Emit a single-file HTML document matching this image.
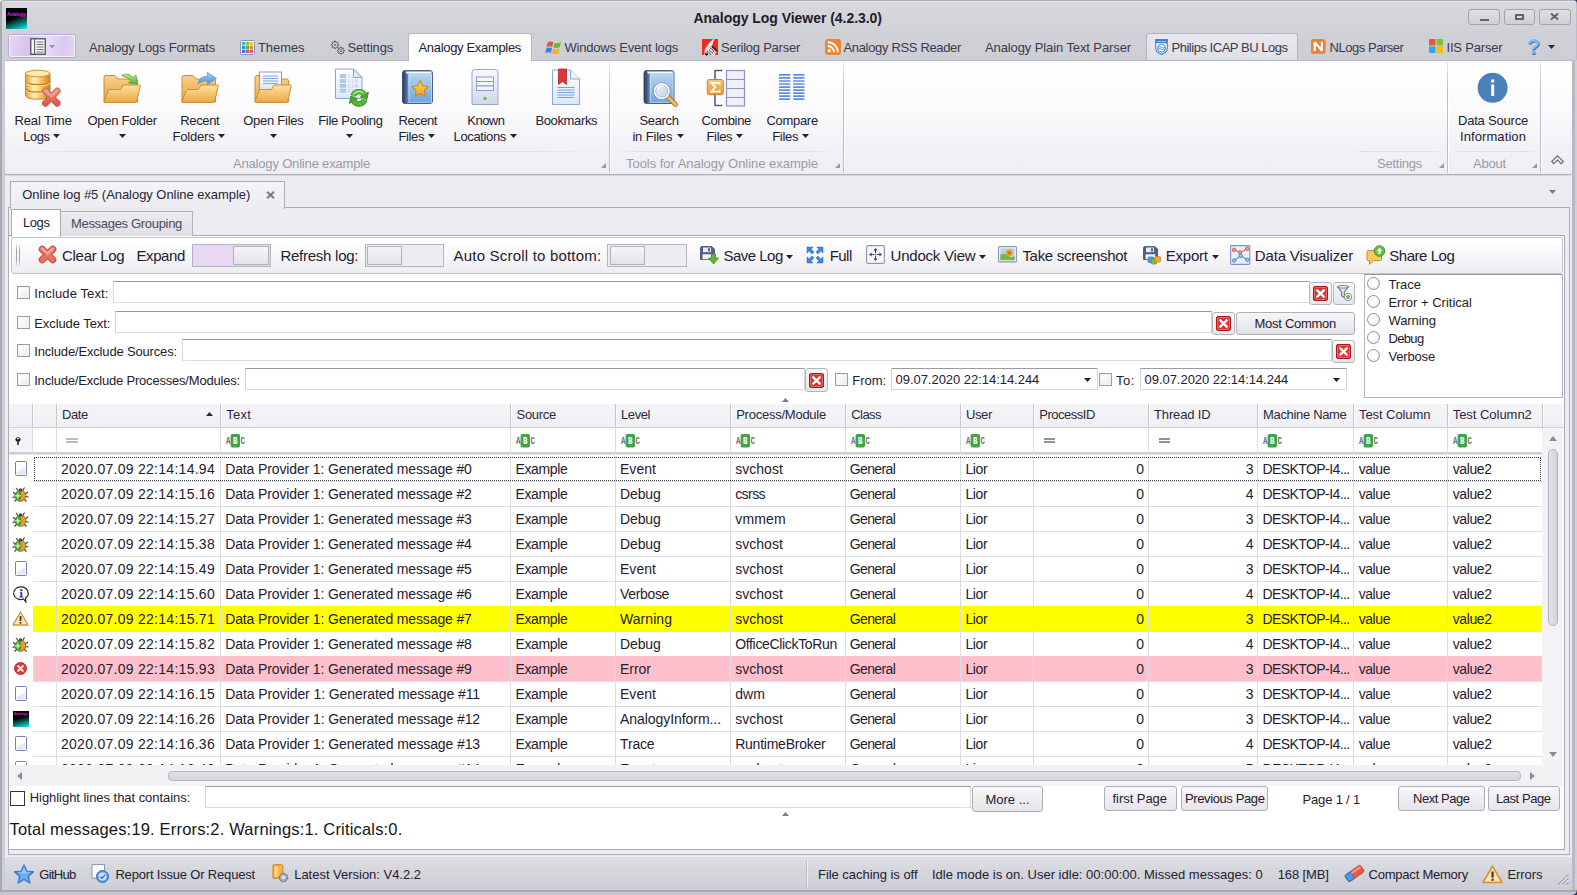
<!DOCTYPE html>
<html lang="en"><head><meta charset="utf-8"><title>Analogy Log Viewer (4.2.3.0)</title>
<style>
html,body{margin:0;padding:0}
body{width:1577px;height:895px;overflow:hidden;position:relative;background:#d2d2d9;font-family:"Liberation Sans",sans-serif;color:#1f2030;font-size:13px}
div,span.t,svg.i{position:absolute;box-sizing:border-box}
span.t{white-space:pre;display:block}
svg.i{overflow:visible}

</style></head>
<body>
<div style="left:0px;top:0px;width:1577px;height:62px;background:linear-gradient(#d8d8de,#d0d0d7 55%,#cdcdd5)"></div>
<div style="left:0px;top:0px;width:1577px;height:1px;background:#aeaeb8"></div>
<div style="left:0px;top:1px;width:1577px;height:1px;background:#e4e4ea"></div>
<div style="left:0px;top:60px;width:1577px;height:835px;background:#e9e9ee"></div>
<div style="left:0px;top:0px;width:1.5px;height:895px;background:#a9a9b3"></div>
<div style="left:1.5px;top:60px;width:3px;height:835px;background:#cdcdd5"></div>
<div style="left:4.5px;top:60px;width:1px;height:835px;background:#b6b6c0"></div>
<div style="left:1572px;top:60px;width:2.5px;height:835px;background:#b9b9c3"></div>
<div style="left:1574.5px;top:60px;width:2.5px;height:835px;background:#cfcfd7"></div>
<div style="left:1575.5px;top:0px;width:1.5px;height:60px;background:#bcbcc6"></div>
<div style="left:0px;top:890px;width:1577px;height:2px;background:#a9a9b3"></div>
<div style="left:0px;top:892px;width:1577px;height:3px;background:#c6c6ce"></div>
<svg class="i" style="left:1571px;top:889px" width="6" height="6" viewBox="0 0 6 6"><path d="M6 0 V6 H0 Q6 6 6 0Z" fill="#2a3868"/></svg>
<svg class="i" style="left:0px;top:0px" width="4" height="4" viewBox="0 0 4 4"><path d="M0 0 H4 Q0 0 0 4Z" fill="#f0f0f2"/></svg>
<svg class="i" style="left:1573px;top:0px" width="4" height="4" viewBox="0 0 4 4"><path d="M4 0 H0 Q4 0 4 4Z" fill="#2a3868"/></svg>
<div style="left:6px;top:8px;width:21px;height:21px;background:linear-gradient(160deg,#000 0%,#000 45%,#0a6a6a 70%,#19f0f0 100%)"></div>
<span class="t" style="left:7px;top:10.5px;height:6px;line-height:6px;font-size:5px;letter-spacing:-0.105px;font-weight:700;color:#e818d8;">Analogy</span>
<span class="t" style="left:693.5px;top:8.5px;height:18px;line-height:18px;font-size:14px;letter-spacing:-0.039px;font-weight:700;color:#1c1c28;">Analogy Log Viewer (4.2.3.0)</span>
<div style="left:1468px;top:8.5px;width:32px;height:16.5px;border:1px solid #a3a3ad;border-radius:3px;background:linear-gradient(#dedee4,#cfcfd6)"></div>
<div style="left:1503.5px;top:8.5px;width:31.5px;height:16.5px;border:1px solid #a3a3ad;border-radius:3px;background:linear-gradient(#dedee4,#cfcfd6)"></div>
<div style="left:1538.5px;top:8.5px;width:32.5px;height:16.5px;border:1px solid #a3a3ad;border-radius:3px;background:linear-gradient(#dedee4,#cfcfd6)"></div>
<div style="left:1479.5px;top:18.5px;width:9px;height:2px;background:#62626c"></div>
<div style="left:1515px;top:13.5px;width:8.5px;height:6.5px;border:2px solid #62626c;border-top-width:2px"></div>
<svg class="i" style="left:1550px;top:13px" width="9" height="7" viewBox="0 0 9 7"><path d="M1 0.5 L8 6.5 M8 0.5 L1 6.5" stroke="#62626c" stroke-width="2"/></svg>
<div style="left:7.5px;top:33.5px;width:68.5px;height:24.5px;border:1px solid #b9a8d6;border-radius:3px;background:linear-gradient(100deg,#e6d8f6 0%,#d6c3ee 30%,#e9def8 55%,#d9c8f0 80%,#e4d6f5 100%)"></div>
<div style="left:8.5px;top:34.5px;width:66.5px;height:22.5px;border:1px solid rgba(255,255,255,.7);border-radius:2px"></div>
<svg class="i" style="left:30px;top:38px" width="16" height="17" viewBox="0 0 16 17"><rect x="0.75" y="0.75" width="14.5" height="15.5" fill="#fcfcfd" stroke="#585864" stroke-width="1.4"/><path d="M4.6 1 V16" stroke="#585864" stroke-width="1.1"/><path d="M6.5 4h7M6.5 6.5h7M6.5 9h7M6.5 11.5h7M6.5 14h7" stroke="#6a6a76" stroke-width="1"/></svg>
<svg class="i" style="left:48.5px;top:44.5px" width="6" height="3.5" viewBox="0 0 6 3.5"><polygon points="0,0 6,0 3,3.5" fill="#9a8cb4"/></svg>
<span class="t" style="left:89px;top:39.0px;height:17px;line-height:17px;font-size:13px;letter-spacing:-0.204px;color:#3a3a4a;">Analogy Logs Formats</span>
<svg class="i" style="left:240px;top:39.5px" width="15" height="15" viewBox="0 0 15 15"><rect x="0.5" y="0.5" width="14" height="14" rx="1" fill="#fbfcff" stroke="#8494c8"/><rect x="1.9" y="1.9" width="3.4" height="3.4" fill="#4ab0c4"/><rect x="5.8" y="1.9" width="3.4" height="3.4" fill="#7cc444"/><rect x="9.7" y="1.9" width="3.4" height="3.4" fill="#e8c83c"/><rect x="1.9" y="5.8" width="3.4" height="3.4" fill="#4a8ad2"/><rect x="5.8" y="5.8" width="3.4" height="3.4" fill="#5cb23c"/><rect x="9.7" y="5.8" width="3.4" height="3.4" fill="#e88a34"/><rect x="1.9" y="9.7" width="3.4" height="3.4" fill="#4a7aca"/><rect x="5.8" y="9.7" width="3.4" height="3.4" fill="#d04ca4"/><rect x="9.7" y="9.7" width="3.4" height="3.4" fill="#e05c3c"/></svg>
<span class="t" style="left:258px;top:39.0px;height:17px;line-height:17px;font-size:13px;letter-spacing:-0.078px;color:#3a3a4a;">Themes</span>
<svg class="i" style="left:329.5px;top:39.5px" width="16" height="16" viewBox="0 0 16 16"><path d="M8.78 4.43 L8.78 5.17 L7.49 5.55 L7.29 6.03 L7.94 7.21 L7.41 7.74 L6.23 7.09 L5.75 7.29 L5.37 8.58 L4.63 8.58 L4.25 7.29 L3.77 7.09 L2.59 7.74 L2.06 7.21 L2.71 6.03 L2.51 5.55 L1.22 5.17 L1.22 4.43 L2.51 4.05 L2.71 3.57 L2.06 2.39 L2.59 1.86 L3.77 2.51 L4.25 2.31 L4.63 1.02 L5.37 1.02 L5.75 2.31 L6.23 2.51 L7.41 1.86 L7.94 2.39 L7.29 3.57 L7.49 4.05Z" fill="#fafafc" stroke="#3e3e4e" stroke-width="0.9" stroke-linejoin="round"/><circle cx="5" cy="4.8" r="1.1" fill="#d4d4dc" stroke="#3e3e4e" stroke-width="0.7"/><path d="M14.38 10.26 L14.38 10.94 L13.20 11.30 L13.02 11.73 L13.61 12.82 L13.12 13.31 L12.03 12.72 L11.60 12.90 L11.24 14.08 L10.56 14.08 L10.20 12.90 L9.77 12.72 L8.68 13.31 L8.19 12.82 L8.78 11.73 L8.60 11.30 L7.42 10.94 L7.42 10.26 L8.60 9.90 L8.78 9.47 L8.19 8.38 L8.68 7.89 L9.77 8.48 L10.20 8.30 L10.56 7.12 L11.24 7.12 L11.60 8.30 L12.03 8.48 L13.12 7.89 L13.61 8.38 L13.02 9.47 L13.20 9.90Z" fill="#fafafc" stroke="#3e3e4e" stroke-width="0.9" stroke-linejoin="round"/><circle cx="10.9" cy="10.6" r="1.1" fill="#d4d4dc" stroke="#3e3e4e" stroke-width="0.7"/></svg>
<span class="t" style="left:347.5px;top:39.0px;height:17px;line-height:17px;font-size:13px;letter-spacing:-0.186px;color:#3a3a4a;">Settings</span>
<div style="left:408px;top:33px;width:123.5px;height:28px;background:#fff;border:1px solid #b8b8c2;border-bottom:none;border-radius:3px 3px 0 0"></div>
<span class="t" style="left:418.5px;top:39.0px;height:17px;line-height:17px;font-size:13px;letter-spacing:-0.323px;">Analogy Examples</span>
<svg class="i" style="left:546px;top:40px" width="16" height="15" viewBox="0 0 16 15"><path d="M1.5 2.5 Q4.5 0.5 7.3 2.2 L6.2 7 Q3.5 5.5 0.5 7.3Z" fill="#e0583a"/><path d="M8.5 2.7 Q11.5 4.2 15 2.2 L13.8 7 Q10.8 9 7.4 7.3Z" fill="#6ab83c"/><path d="M0.3 8.4 Q3.3 6.5 6 8.2 L4.9 13 Q2 11.4 -0.8 13.3Z" fill="#3a82d8"/><path d="M7.2 8.6 Q10.3 10.3 13.6 8.3 L12.4 13.2 Q9.4 15 6 13.3Z" fill="#f0b428"/></svg>
<span class="t" style="left:564.5px;top:39.0px;height:17px;line-height:17px;font-size:13px;letter-spacing:-0.198px;color:#3a3a4a;">Windows Event logs</span>
<svg class="i" style="left:702px;top:39px" width="16" height="16" viewBox="0 0 16 16"><rect width="16" height="16" fill="#f02a1c"/><path d="M12.6 0 H11.2 Q5.5 5.2 3 9.8 L2.2 16 H12.6 L15 12.4 L10.2 6.2 Q11.3 3 12.6 0Z" fill="#f7e4e2"/><path d="M9.8 7 L15 12.3" stroke="#1a0808" stroke-width="1.5"/><path d="M8.4 8.8 L12.9 13.4 M6.9 10.6 L11.2 15 M5.3 12.2 L8.8 15.8 M3.6 13.6 L5.8 15.9" stroke="#221414" stroke-width="1.1" stroke-dasharray="1.2 0.8"/><path d="M3 14.5 L4.5 15.8 L6 14.6" fill="none" stroke="#1a0808" stroke-width="1.3"/></svg>
<span class="t" style="left:721px;top:39.0px;height:17px;line-height:17px;font-size:13px;letter-spacing:-0.241px;color:#3a3a4a;">Serilog Parser</span>
<svg class="i" style="left:825px;top:39px" width="16" height="16" viewBox="0 0 16 16"><rect width="16" height="16" rx="3" fill="#f08428"/><circle cx="4.2" cy="11.8" r="1.7" fill="#fff"/><path d="M2.7 7 A6.3 6.3 0 0 1 9 13.3 M2.7 3.2 A10 10 0 0 1 12.8 13.3" fill="none" stroke="#fff" stroke-width="1.9"/></svg>
<span class="t" style="left:843.5px;top:39.0px;height:17px;line-height:17px;font-size:13px;letter-spacing:-0.338px;color:#3a3a4a;">Analogy RSS Reader</span>
<span class="t" style="left:985px;top:39.0px;height:17px;line-height:17px;font-size:13px;letter-spacing:-0.105px;color:#3a3a4a;">Analogy Plain Text Parser</span>
<div style="left:1146px;top:33px;width:151.5px;height:27px;background:linear-gradient(#e8e8ee,#dfdfe6);border:1px solid #b4b4c0;border-bottom:none;border-radius:3px 3px 0 0"></div>
<svg class="i" style="left:1155.3px;top:39px" width="13" height="16" viewBox="0 0 13 16"><path d="M0.7 0.7 H12.3 V9 Q12.3 13.6 6.5 15.3 Q0.7 13.6 0.7 9Z" fill="#f2f7fe" stroke="#4a88d8" stroke-width="1.2"/><path d="M0.7 0.7 H12.3 V4.2 H0.7Z" fill="#3f7fd2"/><path d="M2.3 2.5 H10.7" stroke="#cfe2f8" stroke-width="1" stroke-dasharray="1 0.5"/><circle cx="6.5" cy="9.2" r="3.9" fill="#fdfeff" stroke="#4a88d8" stroke-width="1"/><path d="M2.8 8.4 Q4.6 7 6.5 8.4 T10.2 8.4 M2.8 10.2 Q4.6 8.8 6.5 10.2 T10.2 10.2" fill="none" stroke="#4a88d8" stroke-width="0.9"/></svg>
<span class="t" style="left:1171.5px;top:39.0px;height:17px;line-height:17px;font-size:13px;letter-spacing:-0.475px;color:#3a3a4a;">Philips ICAP BU Logs</span>
<svg class="i" style="left:1311.3px;top:39.2px" width="15" height="15" viewBox="0 0 15 15"><rect width="14.6" height="14.8" rx="2.6" fill="#f08030"/><path d="M3.7 12 V3.2 L10.9 11.6 V2.8" fill="none" stroke="#d86818" stroke-width="3.4" stroke-linejoin="bevel"/><path d="M3.7 12 V3.2 L10.9 11.6 V2.8" fill="none" stroke="#fff" stroke-width="2.4" stroke-linejoin="bevel"/></svg>
<span class="t" style="left:1329.5px;top:39.0px;height:17px;line-height:17px;font-size:13px;letter-spacing:-0.457px;color:#3a3a4a;">NLogs Parser</span>
<svg class="i" style="left:1429px;top:39px" width="14" height="15" viewBox="0 0 14 15"><rect x="0" y="0" width="6.5" height="6.5" fill="#f05828"/><rect x="7.5" y="0" width="6.5" height="6.5" fill="#80c828"/><rect x="0" y="7.5" width="6.5" height="6.5" fill="#28a8f0"/><rect x="7.5" y="7.5" width="6.5" height="6.5" fill="#f8b818"/></svg>
<span class="t" style="left:1446.5px;top:39.0px;height:17px;line-height:17px;font-size:13px;letter-spacing:-0.180px;color:#3a3a4a;">IIS Parser</span>
<span class="t" style="left:1526.8px;top:31.8px;height:29px;line-height:29px;font-size:22px;letter-spacing:-1.200px;font-weight:700;color:#86b8f0;text-shadow:0.6px 0.8px 0.6px #3a6cb8,-0.4px -0.4px 0.5px #d8ecff;">?</span>
<svg class="i" style="left:1547.5px;top:45px" width="7" height="4" viewBox="0 0 7 4"><polygon points="0,0 7,0 3.5,4" fill="#2a2a36"/></svg>
<div style="left:5px;top:60px;width:1567px;height:114.6px;background:linear-gradient(#ffffff 0%,#fbfbfd 40%,#f2f2f6 78%,#eeeef3 100%);border-top:1px solid #b8b8c2;border-bottom:1px solid #adadb9;border-radius:0 0 3px 3px"></div>
<div style="left:409px;top:59px;width:121.5px;height:3px;background:#fff"></div>
<div style="left:5px;top:174.6px;width:1567px;height:1.5px;background:linear-gradient(#cfcfd7,#e4e4ea)"></div>
<div style="left:608.8px;top:62px;width:1px;height:111px;background:linear-gradient(rgba(190,190,200,.35),#bcbcc6 25%,#bcbcc6 90%,#c4c4cc)"></div>
<div style="left:609.8px;top:62px;width:1px;height:111px;background:rgba(255,255,255,.9)"></div>
<div style="left:843px;top:62px;width:1px;height:111px;background:linear-gradient(rgba(190,190,200,.35),#bcbcc6 25%,#bcbcc6 90%,#c4c4cc)"></div>
<div style="left:844px;top:62px;width:1px;height:111px;background:rgba(255,255,255,.9)"></div>
<div style="left:1447px;top:62px;width:1px;height:111px;background:linear-gradient(rgba(190,190,200,.35),#bcbcc6 25%,#bcbcc6 90%,#c4c4cc)"></div>
<div style="left:1448px;top:62px;width:1px;height:111px;background:rgba(255,255,255,.9)"></div>
<div style="left:1540px;top:62px;width:1px;height:111px;background:linear-gradient(rgba(190,190,200,.35),#bcbcc6 25%,#bcbcc6 90%,#c4c4cc)"></div>
<div style="left:1541px;top:62px;width:1px;height:111px;background:rgba(255,255,255,.9)"></div>
<div style="left:10px;top:151px;width:595px;height:1px;background:linear-gradient(90deg,rgba(220,220,228,0),#dcdce3 15%,#dcdce3 85%,rgba(220,220,228,0))"></div>
<div style="left:614px;top:151px;width:224px;height:1px;background:linear-gradient(90deg,rgba(220,220,228,0),#dcdce3 15%,#dcdce3 85%,rgba(220,220,228,0))"></div>
<div style="left:1352px;top:151px;width:91px;height:1px;background:linear-gradient(90deg,rgba(220,220,228,0),#dcdce3 15%,#dcdce3 85%,rgba(220,220,228,0))"></div>
<div style="left:1452px;top:151px;width:84px;height:1px;background:linear-gradient(90deg,rgba(220,220,228,0),#dcdce3 15%,#dcdce3 85%,rgba(220,220,228,0))"></div>
<span class="t" style="left:233px;top:154.5px;height:17px;line-height:17px;font-size:13px;letter-spacing:-0.178px;color:#9a9ba6;">Analogy Online example</span>
<span class="t" style="left:626px;top:154.5px;height:17px;line-height:17px;font-size:13px;letter-spacing:-0.030px;color:#9a9ba6;">Tools for Analogy Online example</span>
<span class="t" style="left:1377px;top:154.5px;height:17px;line-height:17px;font-size:13px;letter-spacing:-0.248px;color:#9a9ba6;">Settings</span>
<span class="t" style="left:1473px;top:154.5px;height:17px;line-height:17px;font-size:13px;letter-spacing:-0.197px;color:#9a9ba6;">About</span>
<svg class="i" style="left:601px;top:163px" width="5" height="5" viewBox="0 0 5 5"><polygon points="5,0 5,5 0,5" fill="#9a9aa6"/></svg>
<svg class="i" style="left:834.5px;top:163px" width="5" height="5" viewBox="0 0 5 5"><polygon points="5,0 5,5 0,5" fill="#9a9aa6"/></svg>
<svg class="i" style="left:1439px;top:163px" width="5" height="5" viewBox="0 0 5 5"><polygon points="5,0 5,5 0,5" fill="#9a9aa6"/></svg>
<svg class="i" style="left:1532px;top:163px" width="5" height="5" viewBox="0 0 5 5"><polygon points="5,0 5,5 0,5" fill="#9a9aa6"/></svg>
<svg class="i" style="left:1550.5px;top:154.5px" width="13" height="10" viewBox="0 0 13 10"><path d="M6.5 0.8 L12.3 6.5 L10.2 8.6 L6.5 4.9 L2.8 8.6 L0.7 6.5Z" fill="#f8f8fa" stroke="#62626e" stroke-width="1.1" stroke-linejoin="miter"/></svg>
<svg class="i" style="left:0;top:0" width="1577" height="180" viewBox="0 0 1577 180"><defs>
<linearGradient id="gFold" x1="0" y1="0" x2="0" y2="1"><stop offset="0" stop-color="#fde3a0"/><stop offset="1" stop-color="#efa545"/></linearGradient>
<linearGradient id="gFoldB" x1="0" y1="0" x2="0" y2="1"><stop offset="0" stop-color="#f8d288"/><stop offset="1" stop-color="#e6a244"/></linearGradient>
<linearGradient id="gDb" x1="0" y1="0" x2="1" y2="0"><stop offset="0" stop-color="#e8a030"/><stop offset=".35" stop-color="#fff0b8"/><stop offset=".7" stop-color="#f4bc48"/><stop offset="1" stop-color="#c88020"/></linearGradient>
<linearGradient id="gDoc" x1="0" y1="0" x2="0" y2="1"><stop offset="0" stop-color="#ffffff"/><stop offset="1" stop-color="#dbe6f6"/></linearGradient>
<linearGradient id="gBook" x1="0" y1="0" x2="0" y2="1"><stop offset="0" stop-color="#bcdaf5"/><stop offset="1" stop-color="#6ea4de"/></linearGradient>
<linearGradient id="gSrv" x1="0" y1="0" x2="0" y2="1"><stop offset="0" stop-color="#f6f8fc"/><stop offset="1" stop-color="#cfd8ea"/></linearGradient>
<linearGradient id="gSig" x1="0" y1="0" x2="0" y2="1"><stop offset="0" stop-color="#f8c878"/><stop offset="1" stop-color="#e89838"/></linearGradient>
<linearGradient id="gRedX" x1="0" y1="0" x2="0" y2="1"><stop offset="0" stop-color="#ec8a7a"/><stop offset="1" stop-color="#d85c4c"/></linearGradient>
<linearGradient id="gGrn" x1="0" y1="0" x2="0" y2="1"><stop offset="0" stop-color="#bce890"/><stop offset="1" stop-color="#58ac38"/></linearGradient>
<linearGradient id="gBlu" x1="0" y1="0" x2="0" y2="1"><stop offset="0" stop-color="#a8d0f4"/><stop offset="1" stop-color="#4890d8"/></linearGradient>
<linearGradient id="gSpine" x1="0" y1="0" x2="1" y2="0"><stop offset="0" stop-color="#2c3a5c"/><stop offset=".6" stop-color="#4a628e"/><stop offset="1" stop-color="#6f8dba"/></linearGradient>
<linearGradient id="gStar" x1="0" y1="0" x2="0" y2="1"><stop offset="0" stop-color="#fdd868"/><stop offset="1" stop-color="#eca030"/></linearGradient>
<linearGradient id="gLens" x1="0" y1="0" x2="1" y2="1"><stop offset="0" stop-color="#eef4fb"/><stop offset="1" stop-color="#b9d0ea"/></linearGradient>
</defs><path d="M25.5 73.5 V95 Q25.5 99.2 37.8 99.2 Q50 99.2 50 95 V73.5Z" fill="url(#gDb)" stroke="#c48a30" stroke-width="1"/><ellipse cx="37.8" cy="73.5" rx="12.2" ry="3.3" fill="#fce9b4" stroke="#cc9438" stroke-width="1"/><path d="M25.5 81 Q25.5 84.6 37.8 84.6 Q50 84.6 50 81 M25.5 88.6 Q25.5 92.2 37.8 92.2 Q50 92.2 50 88.6" fill="none" stroke="#b87c24" stroke-width="1.2"/><path d="M25.5 82.2 Q25.5 85.8 37.8 85.8 Q50 85.8 50 82.2 M25.5 89.8 Q25.5 93.4 37.8 93.4 Q50 93.4 50 89.8" fill="none" stroke="#fdf0c8" stroke-width="0.9" opacity=".8"/><path d="M45.3 91 L57.3 103.4 M57.3 91 L45.3 103.4" stroke="#c85a4a" stroke-width="6.6" stroke-linecap="round"/><path d="M45.3 91 L57.3 103.4 M57.3 91 L45.3 103.4" stroke="url(#gRedX)" stroke-width="5" stroke-linecap="round"/><path d="M45.3 90.4 L51.3 96.4 L57.3 90.4" fill="none" stroke="#f0a090" stroke-width="2.2" stroke-linecap="round"/><path d="M104 77.5 Q104 75.5 106 75.5 L115 75.5 L118 79 L136 79 Q137.5 79 137.5 81 L137.5 102 L104 102Z" fill="url(#gFoldB)" stroke="#cf8c34" stroke-width="1"/><path d="M108.2 90.8 Q108.6 89.5 110 89.5 L120.5 89.5 L123 85 L139.2 85 Q140.6 85 140.2 86.5 L136.7 101.2 Q136.3 102.5 134.8 102.5 L105 102.5 Q103.7 102.5 104.1 101.2Z" fill="url(#gFold)" stroke="#cf8c36" stroke-width="1"/><path d="M121.5 75.5 Q128 72 133 77.5 L136 75 L137.5 84 L128.5 83 L131 80.5 Q127.5 77.5 121.5 75.5Z" fill="url(#gGrn)" stroke="#58a838" stroke-width="0.8"/><path d="M182 77.5 Q182 75.5 184 75.5 L193 75.5 L196 79 L214 79 Q215.5 79 215.5 81 L215.5 102 L182 102Z" fill="url(#gFoldB)" stroke="#cf8c34" stroke-width="1"/><path d="M186.2 90.8 Q186.6 89.5 188 89.5 L198.5 89.5 L201 85 L217.2 85 Q218.6 85 218.2 86.5 L214.7 101.2 Q214.3 102.5 212.8 102.5 L183 102.5 Q181.7 102.5 182.1 101.2Z" fill="url(#gFold)" stroke="#cf8c36" stroke-width="1"/><path d="M198 84 Q199 76.5 207.5 76.2 L207.5 72.5 L216.5 78.5 L207.5 84.5 L207.5 80.8 Q202 80.5 198 84Z" fill="url(#gBlu)" stroke="#5a98d8" stroke-width="0.8"/><path d="M255 77.5 Q255 75.5 257 75.5 L266 75.5 L269 79 L287 79 Q288.5 79 288.5 81 L288.5 102 L255 102Z" fill="url(#gFoldB)" stroke="#cf8c34"/><rect x="259.5" y="72" width="22" height="18" fill="url(#gDoc)" stroke="#8898c0" stroke-width="1"/><path d="M263 76h15M263 78.5h15M263 81h15M263 83.5h15" stroke="#8aa4d8" stroke-width="1"/><path d="M259.2 90.8 Q259.6 89.5 261 89.5 L271.5 89.5 L274 85 L290.2 85 Q291.6 85 291.2 86.5 L287.7 101.2 Q287.3 102.5 285.8 102.5 L256 102.5 Q254.7 102.5 255.1 101.2Z" fill="url(#gFold)" stroke="#cf8c36"/><path d="M335.5 69 H353.5 L362 77.5 V98.5 H335.5Z" fill="url(#gDoc)" stroke="#86a6d8" stroke-width="1"/><path d="M353.5 69 V77.5 H362Z" fill="#dfe9f8" stroke="#86a6d8" stroke-width="1" stroke-linejoin="round"/><rect x="339.8" y="74.30" width="6.2" height="3.6" fill="#a4c0e6"/><path d="M339.8 76.10h6.2" stroke="#c4d6f0" stroke-width="0.7"/><path d="M347.5 75.20h3M347.5 77.10h3M351.8 75.20h2.2M351.8 77.10h2.2" stroke="#c2d2ea" stroke-width="0.9"/><rect x="339.8" y="79.15" width="6.2" height="3.6" fill="#a4c0e6"/><path d="M339.8 80.95h6.2" stroke="#c4d6f0" stroke-width="0.7"/><path d="M347.5 80.05h3M347.5 81.95h3M351.8 80.05h2.2M351.8 81.95h2.2" stroke="#c2d2ea" stroke-width="0.9"/><path d="M355.3 80.05h2.3M355.3 81.95h2.3" stroke="#a8bee2" stroke-width="1.1"/><rect x="339.8" y="84.00" width="6.2" height="3.6" fill="#a4c0e6"/><path d="M339.8 85.80h6.2" stroke="#c4d6f0" stroke-width="0.7"/><path d="M347.5 84.90h3M347.5 86.80h3M351.8 84.90h2.2M351.8 86.80h2.2" stroke="#c2d2ea" stroke-width="0.9"/><path d="M355.3 84.90h2.3M355.3 86.80h2.3" stroke="#a8bee2" stroke-width="1.1"/><rect x="339.8" y="88.85" width="6.2" height="3.6" fill="#a4c0e6"/><path d="M339.8 90.65h6.2" stroke="#c4d6f0" stroke-width="0.7"/><path d="M347.5 89.75h3M347.5 91.65h3M351.8 89.75h2.2M351.8 91.65h2.2" stroke="#c2d2ea" stroke-width="0.9"/><path d="M355.3 89.75h2.3M355.3 91.65h2.3" stroke="#a8bee2" stroke-width="1.1"/><path d="M353.07 95.68 A6.2 6.2 0 0 1 364.27 94.7" fill="none" stroke="#2f8c1f" stroke-width="5.4"/><path d="M364.73 99.92 A6.2 6.2 0 0 1 353.53 100.9" fill="none" stroke="#2f8c1f" stroke-width="5.4"/><path d="M368.3 92.2 L360.4 96.9 L366.9 99.6Z M349.5 103.4 L357.4 98.7 L350.9 96Z" fill="#4aa832" stroke="#2f8c1f" stroke-width="0.9" stroke-linejoin="round"/><path d="M353.07 95.68 A6.2 6.2 0 0 1 364.27 94.7" fill="none" stroke="#68c040" stroke-width="3.8"/><path d="M364.73 99.92 A6.2 6.2 0 0 1 353.53 100.9" fill="none" stroke="#58b436" stroke-width="3.8"/><path d="M353.6 94.2 A6.9 6.9 0 0 1 363 92.6" fill="none" stroke="#b4ec8c" stroke-width="1.3"/><rect x="402.5" y="70.5" width="30" height="33" rx="2.6" fill="url(#gBook)" stroke="#46608e" stroke-width="1"/><path d="M402.5 73.1 Q402.5 70.5 405.1 70.5 H408.3 V103.5 H405.1 Q402.5 103.5 402.5 100.9Z" fill="url(#gSpine)"/><path d="M405.5 71.4 H431.7 V74 H408.3 Q405.5 74 405.5 71.4Z" fill="#f6f9fd" stroke="#6a86b4" stroke-width="0.6"/><rect x="409.1" y="74.8" width="22.4" height="27.6" fill="none" stroke="rgba(255,255,255,.4)" stroke-width="1"/><path d="M420.2 80.6 L422.7 85.7 L428.4 86.5 L424.3 90.5 L425.3 96.2 L420.2 93.5 L415.1 96.2 L416.1 90.5 L412.0 86.5 L417.7 85.7Z" fill="url(#gStar)" stroke="#c98a24" stroke-width="1.1" stroke-linejoin="round"/><path d="M472 72 Q472 69.5 474.5 69.5 H495.5 Q498 69.5 498 72 V104.5 H472Z" fill="url(#gSrv)" stroke="#9aa8c8" stroke-width="1"/><rect x="476.5" y="77" width="17" height="4.5" fill="#f4f6fb" stroke="#8c9cc4" stroke-width="1"/><rect x="476.5" y="81.5" width="17" height="4.5" fill="#f4f6fb" stroke="#8c9cc4" stroke-width="1"/><rect x="476.5" y="86" width="17" height="4.5" fill="#f4f6fb" stroke="#8c9cc4" stroke-width="1"/><circle cx="485" cy="98.5" r="1.7" fill="#78b838"/><path d="M552.5 70 H570.5 L579.5 79 V104.5 H552.5Z" fill="url(#gDoc)" stroke="#8aa8d8" stroke-width="1"/><path d="M570.5 70 V79 H579.5" fill="#eef4fc" stroke="#8aa8d8" stroke-width="1"/><path d="M558.5 69 H566.5 V84.5 L562.5 81.5 L558.5 84.5Z" fill="#d83840" stroke="#b02830" stroke-width="0.8"/><path d="M557.5 87.5h17M557.5 90h17M557.5 92.5h17M557.5 95h17M557.5 97.5h17" stroke="#7aa0dc" stroke-width="1"/><rect x="644" y="70.5" width="30" height="33" rx="2.6" fill="url(#gBook)" stroke="#46608e" stroke-width="1"/><path d="M644 73.1 Q644 70.5 646.6 70.5 H649.8 V103.5 H646.6 Q644 103.5 644 100.9Z" fill="url(#gSpine)"/><path d="M647 71.4 H673.2 V74 H649.8 Q647 74 647 71.4Z" fill="#f6f9fd" stroke="#6a86b4" stroke-width="0.6"/><rect x="650.6" y="74.8" width="22.4" height="27.6" fill="none" stroke="rgba(255,255,255,.4)" stroke-width="1"/><path d="M668.6 97.8 L675.6 104.4" stroke="#b47a2a" stroke-width="4.8" stroke-linecap="round"/><path d="M668.6 97.8 L675.6 104.4" stroke="#f2bc68" stroke-width="2.8" stroke-linecap="round"/><circle cx="661.8" cy="91.1" r="8.3" fill="#dbe8f6" stroke="#8792b0" stroke-width="1"/><circle cx="661.8" cy="91.1" r="7" fill="url(#gLens)" stroke="#fbfcfe" stroke-width="1.7"/><circle cx="661.8" cy="91.1" r="6" fill="none" stroke="#9aa8c4" stroke-width="0.7"/><path d="M657.6 89.3 Q659 85.9 662.6 85.7" fill="none" stroke="#fff" stroke-width="1.5" stroke-linecap="round"/><path d="M722.5 70.5 H715 V105.5 H722.5" fill="none" stroke="#55607c" stroke-width="1.6"/><rect x="726.5" y="70.5" width="18" height="35.5" fill="#eef0fa" stroke="#8c94c0" stroke-width="1.2"/><path d="M726.5 79.5h18M726.5 88.5h18M726.5 97.5h18" stroke="#8c94c0" stroke-width="1.2"/><rect x="707.3" y="79.5" width="16" height="15.2" rx="2" fill="url(#gSig)" stroke="#c88430" stroke-width="1"/><path d="M719.5 84.5 V82.8 H711.3 L715.3 87.2 L711.3 91.6 H719.5 V89.8" fill="none" stroke="#fff" stroke-width="1.7"/><path d="M779 74.90h11.3M793.2 74.90h11.3" stroke="#5e8edc" stroke-width="1.7"/><path d="M779 77.94h11.3M793.2 77.94h11.3" stroke="#5e8edc" stroke-width="1.7"/><path d="M779 80.98h11.3M793.2 80.98h11.3" stroke="#5e8edc" stroke-width="1.7"/><path d="M779 84.02h11.3M793.2 84.02h11.3" stroke="#5e8edc" stroke-width="1.7"/><path d="M779 87.06h11.3M793.2 87.06h11.3" stroke="#5e8edc" stroke-width="1.7"/><path d="M779 90.10h11.3M793.2 90.10h11.3" stroke="#5e8edc" stroke-width="1.7"/><path d="M779 93.14h11.3M793.2 93.14h11.3" stroke="#5e8edc" stroke-width="1.7"/><path d="M779 96.18h11.3M793.2 96.18h11.3" stroke="#5e8edc" stroke-width="1.7"/><path d="M779 99.22h11.3M793.2 99.22h11.3" stroke="#5e8edc" stroke-width="1.7"/><circle cx="1492.6" cy="87.8" r="15" fill="#4a80ba"/><rect x="1491.2" y="84.5" width="3" height="11.5" fill="#fff"/><rect x="1491.2" y="79.5" width="3" height="3" fill="#fff"/></svg>
<span class="t" style="left:14.5px;top:112.3px;height:17px;line-height:17px;font-size:13px;letter-spacing:-0.137px;">Real Time</span>
<span class="t" style="left:23.3px;top:128.3px;height:17px;line-height:17px;font-size:13px;letter-spacing:-0.501px;">Logs</span>
<svg class="i" style="left:52.5px;top:134px" width="7" height="4" viewBox="0 0 7 4"><polygon points="0,0 7,0 3.5,4" fill="#1f2030"/></svg>
<span class="t" style="left:87.5px;top:112.3px;height:17px;line-height:17px;font-size:13px;letter-spacing:-0.270px;">Open Folder</span>
<svg class="i" style="left:118.5px;top:134px" width="7" height="4" viewBox="0 0 7 4"><polygon points="0,0 7,0 3.5,4" fill="#1f2030"/></svg>
<span class="t" style="left:180.3px;top:112.3px;height:17px;line-height:17px;font-size:13px;letter-spacing:-0.367px;">Recent</span>
<span class="t" style="left:172.5px;top:128.3px;height:17px;line-height:17px;font-size:13px;letter-spacing:-0.194px;">Folders</span>
<svg class="i" style="left:217.5px;top:134px" width="7" height="4" viewBox="0 0 7 4"><polygon points="0,0 7,0 3.5,4" fill="#1f2030"/></svg>
<span class="t" style="left:243.2px;top:112.3px;height:17px;line-height:17px;font-size:13px;letter-spacing:-0.247px;">Open Files</span>
<svg class="i" style="left:269.5px;top:134px" width="7" height="4" viewBox="0 0 7 4"><polygon points="0,0 7,0 3.5,4" fill="#1f2030"/></svg>
<span class="t" style="left:318.2px;top:112.3px;height:17px;line-height:17px;font-size:13px;letter-spacing:-0.286px;">File Pooling</span>
<svg class="i" style="left:346px;top:134px" width="7" height="4" viewBox="0 0 7 4"><polygon points="0,0 7,0 3.5,4" fill="#1f2030"/></svg>
<span class="t" style="left:398.5px;top:112.3px;height:17px;line-height:17px;font-size:13px;letter-spacing:-0.451px;">Recent</span>
<span class="t" style="left:398.5px;top:128.3px;height:17px;line-height:17px;font-size:13px;letter-spacing:-0.391px;">Files</span>
<svg class="i" style="left:427.5px;top:134px" width="7" height="4" viewBox="0 0 7 4"><polygon points="0,0 7,0 3.5,4" fill="#1f2030"/></svg>
<span class="t" style="left:467.3px;top:112.3px;height:17px;line-height:17px;font-size:13px;letter-spacing:-0.530px;">Known</span>
<span class="t" style="left:453.6px;top:128.3px;height:17px;line-height:17px;font-size:13px;letter-spacing:-0.362px;">Locations</span>
<svg class="i" style="left:510px;top:134px" width="7" height="4" viewBox="0 0 7 4"><polygon points="0,0 7,0 3.5,4" fill="#1f2030"/></svg>
<span class="t" style="left:535.4px;top:112.3px;height:17px;line-height:17px;font-size:13px;letter-spacing:-0.359px;">Bookmarks</span>
<span class="t" style="left:639.5px;top:112.3px;height:17px;line-height:17px;font-size:13px;letter-spacing:-0.351px;">Search</span>
<span class="t" style="left:632.4px;top:128.3px;height:17px;line-height:17px;font-size:13px;letter-spacing:-0.161px;">in Files</span>
<svg class="i" style="left:676.5px;top:134px" width="7" height="4" viewBox="0 0 7 4"><polygon points="0,0 7,0 3.5,4" fill="#1f2030"/></svg>
<span class="t" style="left:701.4px;top:112.3px;height:17px;line-height:17px;font-size:13px;letter-spacing:-0.362px;">Combine</span>
<span class="t" style="left:706.5px;top:128.3px;height:17px;line-height:17px;font-size:13px;letter-spacing:-0.351px;">Files</span>
<svg class="i" style="left:736px;top:134px" width="7" height="4" viewBox="0 0 7 4"><polygon points="0,0 7,0 3.5,4" fill="#1f2030"/></svg>
<span class="t" style="left:766.5px;top:112.3px;height:17px;line-height:17px;font-size:13px;letter-spacing:-0.310px;">Compare</span>
<span class="t" style="left:772.2px;top:128.3px;height:17px;line-height:17px;font-size:13px;letter-spacing:-0.291px;">Files</span>
<svg class="i" style="left:802px;top:134px" width="7" height="4" viewBox="0 0 7 4"><polygon points="0,0 7,0 3.5,4" fill="#1f2030"/></svg>
<span class="t" style="left:1458px;top:112.3px;height:17px;line-height:17px;font-size:13px;letter-spacing:-0.206px;">Data Source</span>
<span class="t" style="left:1460px;top:128.3px;height:17px;line-height:17px;font-size:13px;letter-spacing:0.087px;">Information</span>
<div style="left:5px;top:176px;width:1567px;height:680px;background:#ebebf0"></div>
<svg class="i" style="left:1549px;top:190px" width="7" height="4" viewBox="0 0 7 4"><polygon points="0,0 7,0 3.5,4" fill="#7a7a88"/></svg>
<div style="left:7.5px;top:207px;width:1562.5px;height:647.5px;background:#ececf1;border:1px solid #adadb8"></div>
<div style="left:10px;top:180.5px;width:275px;height:28px;background:linear-gradient(#f4f4f8,#ececf1);border:1px solid #adadb8;border-bottom:none"></div>
<span class="t" style="left:22.3px;top:186.0px;height:17px;line-height:17px;font-size:13px;letter-spacing:-0.048px;color:#26263a;">Online log #5 (Analogy Online example)</span>
<svg class="i" style="left:265.5px;top:190.5px" width="9" height="8" viewBox="0 0 9 8"><path d="M1 0.8 L8 7.2 M8 0.8 L1 7.2" stroke="#76768a" stroke-width="2"/></svg>
<div style="left:8.5px;top:235px;width:1556px;height:615px;background:#fff;border:1px solid #a9a9b4;border-left:none"></div>
<div style="left:60px;top:210.5px;width:132.5px;height:25px;background:linear-gradient(#ececf1,#dedee5);border:1px solid #b0b0bb;border-bottom:none"></div>
<div style="left:11px;top:208.5px;width:49.5px;height:28px;background:#fff;border:1px solid #a9a9b4;border-bottom:none"></div>
<span class="t" style="left:23px;top:214.0px;height:17px;line-height:17px;font-size:13px;letter-spacing:-0.426px;">Logs</span>
<span class="t" style="left:71px;top:215.0px;height:17px;line-height:17px;font-size:13px;letter-spacing:-0.314px;color:#4a4a5c;">Messages Grouping</span>
<div style="left:10.5px;top:236.5px;width:1552px;height:37px;background:linear-gradient(#ffffff,#f7f7fa 50%,#ededf2);border:1px solid #c3c3cc;border-radius:3px"></div>
<div style="left:16px;top:243px;width:1px;height:24px;background:linear-gradient(rgba(160,160,172,0),#a4a4b0 30%,#a4a4b0 70%,rgba(160,160,172,0))"></div>
<div style="left:18.5px;top:243px;width:1px;height:24px;background:linear-gradient(rgba(160,160,172,0),#a4a4b0 30%,#a4a4b0 70%,rgba(160,160,172,0))"></div>
<svg class="i" style="left:38px;top:245px" width="19" height="19" viewBox="0 0 19 19"><path d="M4.2 4.2 L14.8 14.8 M14.8 4.2 L4.2 14.8" stroke="#cc4c3a" stroke-width="7" stroke-linecap="round"/><path d="M4.2 4.2 L14.8 14.8 M14.8 4.2 L4.2 14.8" stroke="#e47260" stroke-width="5" stroke-linecap="round"/><path d="M4.2 3.6 L9.5 8.6 L14.8 3.6" fill="none" stroke="#f4a898" stroke-width="2.4" stroke-linecap="round"/></svg>
<span class="t" style="left:62px;top:245.7px;height:20px;line-height:20px;font-size:15px;letter-spacing:-0.294px;">Clear Log</span>
<span class="t" style="left:136.5px;top:245.7px;height:20px;line-height:20px;font-size:15px;letter-spacing:-0.429px;">Expand</span>
<div style="left:191.5px;top:243.5px;width:79.5px;height:23.5px;background:#e8d8f4;border:1px solid #b4b4c0"></div>
<div style="left:233px;top:245.5px;width:36px;height:19.5px;background:linear-gradient(#f6f6f9,#e2e2e8);border:1px solid #b0b0bc"></div>
<span class="t" style="left:280.4px;top:245.7px;height:20px;line-height:20px;font-size:15px;letter-spacing:-0.248px;">Refresh log:</span>
<div style="left:364.5px;top:243.5px;width:79.0px;height:23.5px;background:#ececf1;border:1px solid #b4b4c0"></div>
<div style="left:366.5px;top:245.5px;width:35.5px;height:19.5px;background:linear-gradient(#f6f6f9,#e2e2e8);border:1px solid #b0b0bc"></div>
<span class="t" style="left:453.6px;top:245.7px;height:20px;line-height:20px;font-size:15px;letter-spacing:0.195px;">Auto Scroll to bottom:</span>
<div style="left:607px;top:243.5px;width:80px;height:23.5px;background:#ececf1;border:1px solid #b4b4c0"></div>
<div style="left:609.5px;top:245.5px;width:35.0px;height:19.5px;background:linear-gradient(#f6f6f9,#e2e2e8);border:1px solid #b0b0bc"></div>
<svg class="i" style="left:700px;top:246px" width="19" height="19" viewBox="0 0 19 19"><path d="M0.7 1.5 Q0.7 0.7 1.5 0.7 H12 L14.3 3 V13.5 H0.7Z" fill="#56628a" stroke="#3c4668" stroke-width="1"/><rect x="3" y="1.5" width="8" height="4.6" fill="#e8ecf6"/><rect x="8" y="2.2" width="2" height="3.2" fill="#56628a"/><rect x="2.6" y="8.3" width="9.6" height="5" fill="#f4f6fa"/><path d="M11.5 8 H15.5 V12 H18.5 L13.5 18 L8.5 12 H11.5Z" fill="#5cb838" stroke="#3c8c24" stroke-width="0.8"/></svg>
<span class="t" style="left:723.6px;top:245.7px;height:20px;line-height:20px;font-size:15px;letter-spacing:-0.536px;">Save Log</span>
<svg class="i" style="left:786px;top:254.5px" width="7" height="4" viewBox="0 0 7 4"><polygon points="0,0 7,0 3.5,4" fill="#1f2030"/></svg>
<svg class="i" style="left:806px;top:245.7px" width="18" height="18" viewBox="0 0 18 18"><g transform="rotate(0 9 9)"><path d="M1 1 H7.2 L5.1 3.1 L8 6 L6 8 L3.1 5.1 L1 7.2Z" fill="#3e86d8" stroke="#2a68b8" stroke-width="0.5"/></g><g transform="rotate(90 9 9)"><path d="M1 1 H7.2 L5.1 3.1 L8 6 L6 8 L3.1 5.1 L1 7.2Z" fill="#3e86d8" stroke="#2a68b8" stroke-width="0.5"/></g><g transform="rotate(180 9 9)"><path d="M1 1 H7.2 L5.1 3.1 L8 6 L6 8 L3.1 5.1 L1 7.2Z" fill="#3e86d8" stroke="#2a68b8" stroke-width="0.5"/></g><g transform="rotate(270 9 9)"><path d="M1 1 H7.2 L5.1 3.1 L8 6 L6 8 L3.1 5.1 L1 7.2Z" fill="#3e86d8" stroke="#2a68b8" stroke-width="0.5"/></g></svg>
<span class="t" style="left:829.7px;top:245.7px;height:20px;line-height:20px;font-size:15px;letter-spacing:-0.543px;">Full</span>
<svg class="i" style="left:866px;top:245.2px" width="19" height="19" viewBox="0 0 19 19"><rect x="0.6" y="0.6" width="17.8" height="17.8" rx="1.5" fill="#f8f9fc" stroke="#8a94b4" stroke-width="1.1"/><path d="M9.5 3 L11.6 5.6 H7.4Z M9.5 16 L11.6 13.4 H7.4Z M3 9.5 L5.6 7.4 V11.6Z M16 9.5 L13.4 7.4 V11.6Z" fill="#3a4868"/><path d="M9.5 5 V8 M9.5 11 V14 M5 9.5 H8 M11 9.5 H14" stroke="#3a4868" stroke-width="1.1"/><circle cx="9.5" cy="9.5" r="1" fill="#3e86d8"/></svg>
<span class="t" style="left:890.5px;top:245.7px;height:20px;line-height:20px;font-size:15px;letter-spacing:-0.207px;">Undock View</span>
<svg class="i" style="left:979px;top:254.5px" width="7" height="4" viewBox="0 0 7 4"><polygon points="0,0 7,0 3.5,4" fill="#1f2030"/></svg>
<svg class="i" style="left:998px;top:246px" width="19" height="16.5" viewBox="0 0 19 16.5"><rect x="0.6" y="0.6" width="17.8" height="15.3" rx="1" fill="#fdfdfd" stroke="#8a92b0" stroke-width="1.1"/><rect x="2.3" y="2.3" width="14.4" height="11.9" fill="#b4d0f4"/><path d="M2.3 14.2 V8.5 Q7 6.5 10 9.5 T16.7 10 V14.2Z" fill="#78b83c"/><circle cx="11.3" cy="6.8" r="3.5" fill="#f0a030"/><circle cx="11.3" cy="6.8" r="1.6" fill="#c87018"/></svg>
<span class="t" style="left:1022.4px;top:245.7px;height:20px;line-height:20px;font-size:15px;letter-spacing:-0.296px;">Take screenshot</span>
<svg class="i" style="left:1143px;top:246px" width="19" height="19" viewBox="0 0 19 19"><path d="M0.7 1.5 Q0.7 0.7 1.5 0.7 H12 L14.3 3 V13.5 H0.7Z" fill="#56628a" stroke="#3c4668" stroke-width="1"/><rect x="3" y="1.5" width="8" height="4.6" fill="#e8ecf6"/><rect x="8" y="2.2" width="2" height="3.2" fill="#56628a"/><rect x="2.6" y="8.3" width="9.6" height="5" fill="#f4f6fa"/><rect x="5" y="11" width="5.5" height="5.5" rx="1" fill="#58a0e0" stroke="#2a68b8" stroke-width="0.7"/><rect x="8.2" y="12.5" width="5.5" height="5.5" rx="1" fill="#7cc040" stroke="#4a9028" stroke-width="0.7"/><rect x="12" y="10.5" width="5.5" height="5.5" rx="1" fill="#f4a838" stroke="#c87818" stroke-width="0.7"/></svg>
<span class="t" style="left:1165.8px;top:245.7px;height:20px;line-height:20px;font-size:15px;letter-spacing:-0.243px;">Export</span>
<svg class="i" style="left:1211.5px;top:254.5px" width="7" height="4" viewBox="0 0 7 4"><polygon points="0,0 7,0 3.5,4" fill="#1f2030"/></svg>
<svg class="i" style="left:1229.8px;top:245px" width="20.4" height="20" viewBox="0 0 20.4 20"><rect x="0.6" y="0.6" width="19.2" height="18.8" rx="0.8" fill="#eaf0fb" stroke="#7c94cc" stroke-width="1.1"/><path d="M4.1 4.8 L10.2 7.5 L17.2 3.8" fill="none" stroke="#e0644c" stroke-width="1.1"/><path d="M4.1 15.5 L10.7 10.8 L17.4 14.8" fill="none" stroke="#4a8cdc" stroke-width="1.1"/><circle cx="4.1" cy="4.8" r="1.7" fill="#f4a090" stroke="#d85038" stroke-width="0.9"/><circle cx="10.2" cy="7.5" r="1.7" fill="#f4a090" stroke="#d85038" stroke-width="0.9"/><circle cx="17.2" cy="3.8" r="1.7" fill="#f4a090" stroke="#d85038" stroke-width="0.9"/><circle cx="4.1" cy="15.5" r="1.7" fill="#a4c8f4" stroke="#3a7cd0" stroke-width="0.9"/><circle cx="10.7" cy="10.8" r="1.7" fill="#a4c8f4" stroke="#3a7cd0" stroke-width="0.9"/><circle cx="17.4" cy="14.8" r="1.7" fill="#a4c8f4" stroke="#3a7cd0" stroke-width="0.9"/></svg>
<span class="t" style="left:1254.8px;top:245.7px;height:20px;line-height:20px;font-size:15px;letter-spacing:-0.161px;">Data Visualizer</span>
<svg class="i" style="left:1365.5px;top:244.5px" width="20" height="21" viewBox="0 0 20 21"><path d="M1 6.5 Q1 5.5 2 5.5 H14.5 Q15.5 5.5 15.5 6.5 V14.5 Q15.5 15.5 14.5 15.5 H7.5 L3.5 19.5 V15.5 H2 Q1 15.5 1 14.5Z" fill="#f6cc60" stroke="#c89428" stroke-width="1"/><circle cx="13.5" cy="6" r="5.3" fill="#6cc040" stroke="#3c9020" stroke-width="0.9"/><path d="M13.5 2.8 L16.3 6 H14.5 V9 H12.5 V6 H10.7Z" fill="#fff"/></svg>
<span class="t" style="left:1389.2px;top:245.7px;height:20px;line-height:20px;font-size:15px;letter-spacing:-0.448px;">Share Log</span>
<div style="left:17.3px;top:286.3px;width:13px;height:13px;background:linear-gradient(135deg,#ffffff,#ececf0);border:1px solid #9c9ca8;box-shadow:inset 0 0 0 1px #f4f4f7"></div>
<span class="t" style="left:34.2px;top:285.1px;height:17px;line-height:17px;font-size:13px;letter-spacing:0.126px;">Include Text:</span>
<div style="left:113px;top:281px;width:1196.5px;height:22px;background:#fff;border:1px solid #d3d3da;border-top-color:#9a9aa6;border-bottom-color:#dadae0"></div>
<div style="left:1309px;top:281.5px;width:22.5px;height:23.0px;background:linear-gradient(#fafafc,#e6e6eb);border:1px solid #b4b4be;border-radius:3px"></div>
<svg class="i" style="left:1312.75px;top:285.5px" width="15" height="15" viewBox="0 0 15 15"><rect x="0.5" y="0.5" width="14" height="14" rx="1.5" fill="#d83434" stroke="#a81c1c" stroke-width="1"/><rect x="1.6" y="1.6" width="11.8" height="11.8" rx="1" fill="none" stroke="#ee7a7a" stroke-width="0.8"/><path d="M4.3 4.3 L10.7 10.7 M10.7 4.3 L4.3 10.7" stroke="#fff" stroke-width="2.4" stroke-linecap="round"/></svg>
<div style="left:1332.5px;top:281.5px;width:22.5px;height:23px;background:linear-gradient(#fafafc,#e6e6eb);border:1px solid #b4b4be;border-radius:3px"></div>
<svg class="i" style="left:1335.5px;top:285px" width="17" height="17" viewBox="0 0 17 17"><path d="M1.5 1.5 H12.5 L8.3 7 V12.5 L5.7 11 V7Z" fill="#eceef4" stroke="#6a7088" stroke-width="1.1"/><ellipse cx="7" cy="1.8" rx="5.5" ry="1.3" fill="#fafbfd" stroke="#6a7088" stroke-width="0.9"/><circle cx="12" cy="12" r="3.6" fill="#fff" stroke="#7a8098" stroke-width="0.9"/><circle cx="12" cy="12" r="2" fill="#6cb830"/></svg>
<div style="left:17.3px;top:316.2px;width:13px;height:13px;background:linear-gradient(135deg,#ffffff,#ececf0);border:1px solid #9c9ca8;box-shadow:inset 0 0 0 1px #f4f4f7"></div>
<span class="t" style="left:34.2px;top:315.1px;height:17px;line-height:17px;font-size:13px;letter-spacing:-0.076px;">Exclude Text:</span>
<div style="left:115px;top:311px;width:1097px;height:22px;background:#fff;border:1px solid #d3d3da;border-top-color:#9a9aa6;border-bottom-color:#dadae0"></div>
<div style="left:1212px;top:311.5px;width:22.5px;height:23.0px;background:linear-gradient(#fafafc,#e6e6eb);border:1px solid #b4b4be;border-radius:3px"></div>
<svg class="i" style="left:1215.75px;top:315.5px" width="15" height="15" viewBox="0 0 15 15"><rect x="0.5" y="0.5" width="14" height="14" rx="1.5" fill="#d83434" stroke="#a81c1c" stroke-width="1"/><rect x="1.6" y="1.6" width="11.8" height="11.8" rx="1" fill="none" stroke="#ee7a7a" stroke-width="0.8"/><path d="M4.3 4.3 L10.7 10.7 M10.7 4.3 L4.3 10.7" stroke="#fff" stroke-width="2.4" stroke-linecap="round"/></svg>
<div style="left:1235.5px;top:311.5px;width:119.5px;height:23px;background:linear-gradient(#f6f6f9,#e2e2e8);border:1px solid #b0b0bb;border-radius:3px"></div>
<span class="t" style="left:1254.5px;top:314.8px;height:17px;line-height:17px;font-size:13px;letter-spacing:-0.276px;">Most Common</span>
<div style="left:17.3px;top:344.3px;width:13px;height:13px;background:linear-gradient(135deg,#ffffff,#ececf0);border:1px solid #9c9ca8;box-shadow:inset 0 0 0 1px #f4f4f7"></div>
<span class="t" style="left:34.2px;top:342.5px;height:17px;line-height:17px;font-size:13px;letter-spacing:-0.163px;">Include/Exclude Sources:</span>
<div style="left:182px;top:339px;width:1150px;height:22px;background:#fff;border:1px solid #d3d3da;border-top-color:#9a9aa6;border-bottom-color:#dadae0"></div>
<div style="left:1332px;top:339.5px;width:23px;height:23.0px;background:linear-gradient(#fafafc,#e6e6eb);border:1px solid #b4b4be;border-radius:3px"></div>
<svg class="i" style="left:1336.0px;top:343.5px" width="15" height="15" viewBox="0 0 15 15"><rect x="0.5" y="0.5" width="14" height="14" rx="1.5" fill="#d83434" stroke="#a81c1c" stroke-width="1"/><rect x="1.6" y="1.6" width="11.8" height="11.8" rx="1" fill="none" stroke="#ee7a7a" stroke-width="0.8"/><path d="M4.3 4.3 L10.7 10.7 M10.7 4.3 L4.3 10.7" stroke="#fff" stroke-width="2.4" stroke-linecap="round"/></svg>
<div style="left:17.3px;top:373.2px;width:13px;height:13px;background:linear-gradient(135deg,#ffffff,#ececf0);border:1px solid #9c9ca8;box-shadow:inset 0 0 0 1px #f4f4f7"></div>
<span class="t" style="left:34.2px;top:371.5px;height:17px;line-height:17px;font-size:13px;letter-spacing:-0.196px;">Include/Exclude Processes/Modules:</span>
<div style="left:245px;top:368px;width:560px;height:22px;background:#fff;border:1px solid #d3d3da;border-top-color:#9a9aa6;border-bottom-color:#dadae0"></div>
<div style="left:805px;top:368px;width:23px;height:24px;background:linear-gradient(#fafafc,#e6e6eb);border:1px solid #b4b4be;border-radius:3px"></div>
<svg class="i" style="left:809.0px;top:372.5px" width="15" height="15" viewBox="0 0 15 15"><rect x="0.5" y="0.5" width="14" height="14" rx="1.5" fill="#d83434" stroke="#a81c1c" stroke-width="1"/><rect x="1.6" y="1.6" width="11.8" height="11.8" rx="1" fill="none" stroke="#ee7a7a" stroke-width="0.8"/><path d="M4.3 4.3 L10.7 10.7 M10.7 4.3 L4.3 10.7" stroke="#fff" stroke-width="2.4" stroke-linecap="round"/></svg>
<div style="left:835.3px;top:373.2px;width:13px;height:13px;background:linear-gradient(135deg,#ffffff,#ececf0);border:1px solid #9c9ca8;box-shadow:inset 0 0 0 1px #f4f4f7"></div>
<span class="t" style="left:852.3px;top:372.0px;height:17px;line-height:17px;font-size:13px;letter-spacing:-0.051px;">From:</span>
<div style="left:891px;top:368px;width:207px;height:22px;background:#fff;border:1px solid #d3d3da;border-top-color:#9a9aa6;border-bottom-color:#dadae0"></div>
<span class="t" style="left:895.5px;top:370.8px;height:17px;line-height:17px;font-size:13px;letter-spacing:-0.035px;">09.07.2020 22:14:14.244</span>
<svg class="i" style="left:1083.5px;top:377.5px" width="7" height="4" viewBox="0 0 7 4"><polygon points="0,0 7,0 3.5,4" fill="#1f2030"/></svg>
<div style="left:1099.3px;top:373.2px;width:13px;height:13px;background:linear-gradient(135deg,#ffffff,#ececf0);border:1px solid #9c9ca8;box-shadow:inset 0 0 0 1px #f4f4f7"></div>
<span class="t" style="left:1116px;top:372.0px;height:17px;line-height:17px;font-size:13px;letter-spacing:0.552px;">To:</span>
<div style="left:1140px;top:368px;width:207px;height:22px;background:#fff;border:1px solid #d3d3da;border-top-color:#9a9aa6;border-bottom-color:#dadae0"></div>
<span class="t" style="left:1144.5px;top:370.8px;height:17px;line-height:17px;font-size:13px;letter-spacing:-0.035px;">09.07.2020 22:14:14.244</span>
<svg class="i" style="left:1332.5px;top:377.5px" width="7" height="4" viewBox="0 0 7 4"><polygon points="0,0 7,0 3.5,4" fill="#1f2030"/></svg>
<div style="left:1363.5px;top:274.3px;width:199.5px;height:123.5px;background:#fff;border:1px solid #b4b4be;border-top-color:#9a9aa6"></div>
<div style="left:1367.2px;top:277.2px;width:13px;height:13px;border-radius:50%;background:radial-gradient(circle at 40% 35%,#ffffff 35%,#e4e4ea 100%);border:1px solid #8e8e9c"></div>
<span class="t" style="left:1388.4px;top:276.0px;height:17px;line-height:17px;font-size:13px;letter-spacing:-0.030px;">Trace</span>
<div style="left:1367.2px;top:295.2px;width:13px;height:13px;border-radius:50%;background:radial-gradient(circle at 40% 35%,#ffffff 35%,#e4e4ea 100%);border:1px solid #8e8e9c"></div>
<span class="t" style="left:1388.4px;top:294.0px;height:17px;line-height:17px;font-size:13px;letter-spacing:0.010px;">Error + Critical</span>
<div style="left:1367.2px;top:313.2px;width:13px;height:13px;border-radius:50%;background:radial-gradient(circle at 40% 35%,#ffffff 35%,#e4e4ea 100%);border:1px solid #8e8e9c"></div>
<span class="t" style="left:1388.4px;top:312.0px;height:17px;line-height:17px;font-size:13px;letter-spacing:-0.048px;">Warning</span>
<div style="left:1367.2px;top:331.2px;width:13px;height:13px;border-radius:50%;background:radial-gradient(circle at 40% 35%,#ffffff 35%,#e4e4ea 100%);border:1px solid #8e8e9c"></div>
<span class="t" style="left:1388.4px;top:330.0px;height:17px;line-height:17px;font-size:13px;letter-spacing:-0.643px;">Debug</span>
<div style="left:1367.2px;top:349.2px;width:13px;height:13px;border-radius:50%;background:radial-gradient(circle at 40% 35%,#ffffff 35%,#e4e4ea 100%);border:1px solid #8e8e9c"></div>
<span class="t" style="left:1388.4px;top:348.0px;height:17px;line-height:17px;font-size:13px;letter-spacing:-0.158px;">Verbose</span>
<svg class="i" style="left:782px;top:397.7px" width="7" height="4" viewBox="0 0 7 4"><polygon points="0,4 7,4 3.5,0" fill="#7a7a88"/></svg>
<div style="left:8.5px;top:404px;width:1554px;height:23.5px;background:linear-gradient(#f5f5f8,#f0f0f4);border-bottom:1px solid #cfcfd8"></div>
<div style="left:32px;top:404px;width:1px;height:23px;background:#c6c6d0"></div>
<div style="left:33px;top:404px;width:1px;height:23px;background:#fbfbfd"></div>
<div style="left:56px;top:404px;width:1px;height:23px;background:#c6c6d0"></div>
<div style="left:57px;top:404px;width:1px;height:23px;background:#fbfbfd"></div>
<div style="left:220px;top:404px;width:1px;height:23px;background:#c6c6d0"></div>
<div style="left:221px;top:404px;width:1px;height:23px;background:#fbfbfd"></div>
<div style="left:510px;top:404px;width:1px;height:23px;background:#c6c6d0"></div>
<div style="left:511px;top:404px;width:1px;height:23px;background:#fbfbfd"></div>
<div style="left:615px;top:404px;width:1px;height:23px;background:#c6c6d0"></div>
<div style="left:616px;top:404px;width:1px;height:23px;background:#fbfbfd"></div>
<div style="left:730px;top:404px;width:1px;height:23px;background:#c6c6d0"></div>
<div style="left:731px;top:404px;width:1px;height:23px;background:#fbfbfd"></div>
<div style="left:845px;top:404px;width:1px;height:23px;background:#c6c6d0"></div>
<div style="left:846px;top:404px;width:1px;height:23px;background:#fbfbfd"></div>
<div style="left:960px;top:404px;width:1px;height:23px;background:#c6c6d0"></div>
<div style="left:961px;top:404px;width:1px;height:23px;background:#fbfbfd"></div>
<div style="left:1033px;top:404px;width:1px;height:23px;background:#c6c6d0"></div>
<div style="left:1034px;top:404px;width:1px;height:23px;background:#fbfbfd"></div>
<div style="left:1148px;top:404px;width:1px;height:23px;background:#c6c6d0"></div>
<div style="left:1149px;top:404px;width:1px;height:23px;background:#fbfbfd"></div>
<div style="left:1257px;top:404px;width:1px;height:23px;background:#c6c6d0"></div>
<div style="left:1258px;top:404px;width:1px;height:23px;background:#fbfbfd"></div>
<div style="left:1353px;top:404px;width:1px;height:23px;background:#c6c6d0"></div>
<div style="left:1354px;top:404px;width:1px;height:23px;background:#fbfbfd"></div>
<div style="left:1447px;top:404px;width:1px;height:23px;background:#c6c6d0"></div>
<div style="left:1448px;top:404px;width:1px;height:23px;background:#fbfbfd"></div>
<div style="left:1542px;top:404px;width:1px;height:23px;background:#c6c6d0"></div>
<div style="left:1543px;top:404px;width:1px;height:23px;background:#fbfbfd"></div>
<span class="t" style="left:61.9px;top:406.0px;height:17px;line-height:17px;font-size:13px;letter-spacing:-0.392px;color:#2a2a3c;">Date</span>
<span class="t" style="left:226.3px;top:406.0px;height:17px;line-height:17px;font-size:13px;letter-spacing:0.214px;color:#2a2a3c;">Text</span>
<span class="t" style="left:516.5px;top:406.0px;height:17px;line-height:17px;font-size:13px;letter-spacing:-0.284px;color:#2a2a3c;">Source</span>
<span class="t" style="left:621px;top:406.0px;height:17px;line-height:17px;font-size:13px;letter-spacing:-0.416px;color:#2a2a3c;">Level</span>
<span class="t" style="left:736.2px;top:406.0px;height:17px;line-height:17px;font-size:13px;letter-spacing:-0.244px;color:#2a2a3c;">Process/Module</span>
<span class="t" style="left:851.3px;top:406.0px;height:17px;line-height:17px;font-size:13px;letter-spacing:-0.563px;color:#2a2a3c;">Class</span>
<span class="t" style="left:966px;top:406.0px;height:17px;line-height:17px;font-size:13px;letter-spacing:-0.413px;color:#2a2a3c;">User</span>
<span class="t" style="left:1039.3px;top:406.0px;height:17px;line-height:17px;font-size:13px;letter-spacing:-0.485px;color:#2a2a3c;">ProcessID</span>
<span class="t" style="left:1154px;top:406.0px;height:17px;line-height:17px;font-size:13px;letter-spacing:-0.135px;color:#2a2a3c;">Thread ID</span>
<span class="t" style="left:1263px;top:406.0px;height:17px;line-height:17px;font-size:13px;letter-spacing:-0.328px;color:#2a2a3c;">Machine Name</span>
<span class="t" style="left:1359px;top:406.0px;height:17px;line-height:17px;font-size:13px;letter-spacing:-0.077px;color:#2a2a3c;">Test Column</span>
<span class="t" style="left:1452.7px;top:406.0px;height:17px;line-height:17px;font-size:13px;letter-spacing:-0.032px;color:#2a2a3c;">Test Column2</span>
<svg class="i" style="left:205.5px;top:411.5px" width="7" height="4" viewBox="0 0 7 4"><polygon points="0,4 7,4 3.5,0" fill="#2a2a36"/></svg>
<div style="left:8.5px;top:427.5px;width:1534px;height:26px;background:#fff"></div>
<div style="left:8.5px;top:427.5px;width:24px;height:25px;background:#f4f4f7"></div>
<div style="left:8.5px;top:452px;width:1534px;height:1.5px;background:#cdcdd6"></div>
<div style="left:8.5px;top:453.5px;width:1534px;height:1.5px;background:#dfdfe6"></div>
<div style="left:32px;top:427.5px;width:1px;height:26px;background:#dcdce2"></div>
<div style="left:56px;top:427.5px;width:1px;height:26px;background:#dcdce2"></div>
<div style="left:220px;top:427.5px;width:1px;height:26px;background:#dcdce2"></div>
<div style="left:510px;top:427.5px;width:1px;height:26px;background:#dcdce2"></div>
<div style="left:615px;top:427.5px;width:1px;height:26px;background:#dcdce2"></div>
<div style="left:730px;top:427.5px;width:1px;height:26px;background:#dcdce2"></div>
<div style="left:845px;top:427.5px;width:1px;height:26px;background:#dcdce2"></div>
<div style="left:960px;top:427.5px;width:1px;height:26px;background:#dcdce2"></div>
<div style="left:1033px;top:427.5px;width:1px;height:26px;background:#dcdce2"></div>
<div style="left:1148px;top:427.5px;width:1px;height:26px;background:#dcdce2"></div>
<div style="left:1257px;top:427.5px;width:1px;height:26px;background:#dcdce2"></div>
<div style="left:1353px;top:427.5px;width:1px;height:26px;background:#dcdce2"></div>
<div style="left:1447px;top:427.5px;width:1px;height:26px;background:#dcdce2"></div>
<div style="left:66px;top:438.3px;width:11.5px;height:1.5px;background:#bcbcc6"></div>
<div style="left:66px;top:441.3px;width:11.5px;height:1.5px;background:#bcbcc6"></div>
<svg class="i" style="left:226.3px;top:433.8px" width="20" height="13.4" viewBox="0 0 20 13.4"><rect x="4.6" y="0" width="9.4" height="13.4" rx="1.6" fill="#3fa648"/><text transform="translate(-0.1 10.2) scale(.68 1)" font-family="Liberation Mono, monospace" font-size="11" font-weight="700" fill="#6c6c78">A</text><text transform="translate(7 10.2) scale(.68 1)" font-family="Liberation Mono, monospace" font-size="11" font-weight="700" fill="#ffffff">B</text><text transform="translate(14.6 10.2) scale(.68 1)" font-family="Liberation Mono, monospace" font-size="11" font-weight="700" fill="#6c6c78">C</text></svg>
<svg class="i" style="left:516px;top:433.8px" width="20" height="13.4" viewBox="0 0 20 13.4"><rect x="4.6" y="0" width="9.4" height="13.4" rx="1.6" fill="#3fa648"/><text transform="translate(-0.1 10.2) scale(.68 1)" font-family="Liberation Mono, monospace" font-size="11" font-weight="700" fill="#6c6c78">A</text><text transform="translate(7 10.2) scale(.68 1)" font-family="Liberation Mono, monospace" font-size="11" font-weight="700" fill="#ffffff">B</text><text transform="translate(14.6 10.2) scale(.68 1)" font-family="Liberation Mono, monospace" font-size="11" font-weight="700" fill="#6c6c78">C</text></svg>
<svg class="i" style="left:621px;top:433.8px" width="20" height="13.4" viewBox="0 0 20 13.4"><rect x="4.6" y="0" width="9.4" height="13.4" rx="1.6" fill="#3fa648"/><text transform="translate(-0.1 10.2) scale(.68 1)" font-family="Liberation Mono, monospace" font-size="11" font-weight="700" fill="#6c6c78">A</text><text transform="translate(7 10.2) scale(.68 1)" font-family="Liberation Mono, monospace" font-size="11" font-weight="700" fill="#ffffff">B</text><text transform="translate(14.6 10.2) scale(.68 1)" font-family="Liberation Mono, monospace" font-size="11" font-weight="700" fill="#6c6c78">C</text></svg>
<svg class="i" style="left:736px;top:433.8px" width="20" height="13.4" viewBox="0 0 20 13.4"><rect x="4.6" y="0" width="9.4" height="13.4" rx="1.6" fill="#3fa648"/><text transform="translate(-0.1 10.2) scale(.68 1)" font-family="Liberation Mono, monospace" font-size="11" font-weight="700" fill="#6c6c78">A</text><text transform="translate(7 10.2) scale(.68 1)" font-family="Liberation Mono, monospace" font-size="11" font-weight="700" fill="#ffffff">B</text><text transform="translate(14.6 10.2) scale(.68 1)" font-family="Liberation Mono, monospace" font-size="11" font-weight="700" fill="#6c6c78">C</text></svg>
<svg class="i" style="left:851px;top:433.8px" width="20" height="13.4" viewBox="0 0 20 13.4"><rect x="4.6" y="0" width="9.4" height="13.4" rx="1.6" fill="#3fa648"/><text transform="translate(-0.1 10.2) scale(.68 1)" font-family="Liberation Mono, monospace" font-size="11" font-weight="700" fill="#6c6c78">A</text><text transform="translate(7 10.2) scale(.68 1)" font-family="Liberation Mono, monospace" font-size="11" font-weight="700" fill="#ffffff">B</text><text transform="translate(14.6 10.2) scale(.68 1)" font-family="Liberation Mono, monospace" font-size="11" font-weight="700" fill="#6c6c78">C</text></svg>
<svg class="i" style="left:966px;top:433.8px" width="20" height="13.4" viewBox="0 0 20 13.4"><rect x="4.6" y="0" width="9.4" height="13.4" rx="1.6" fill="#3fa648"/><text transform="translate(-0.1 10.2) scale(.68 1)" font-family="Liberation Mono, monospace" font-size="11" font-weight="700" fill="#6c6c78">A</text><text transform="translate(7 10.2) scale(.68 1)" font-family="Liberation Mono, monospace" font-size="11" font-weight="700" fill="#ffffff">B</text><text transform="translate(14.6 10.2) scale(.68 1)" font-family="Liberation Mono, monospace" font-size="11" font-weight="700" fill="#6c6c78">C</text></svg>
<svg class="i" style="left:1263px;top:433.8px" width="20" height="13.4" viewBox="0 0 20 13.4"><rect x="4.6" y="0" width="9.4" height="13.4" rx="1.6" fill="#3fa648"/><text transform="translate(-0.1 10.2) scale(.68 1)" font-family="Liberation Mono, monospace" font-size="11" font-weight="700" fill="#6c6c78">A</text><text transform="translate(7 10.2) scale(.68 1)" font-family="Liberation Mono, monospace" font-size="11" font-weight="700" fill="#ffffff">B</text><text transform="translate(14.6 10.2) scale(.68 1)" font-family="Liberation Mono, monospace" font-size="11" font-weight="700" fill="#6c6c78">C</text></svg>
<svg class="i" style="left:1359px;top:433.8px" width="20" height="13.4" viewBox="0 0 20 13.4"><rect x="4.6" y="0" width="9.4" height="13.4" rx="1.6" fill="#3fa648"/><text transform="translate(-0.1 10.2) scale(.68 1)" font-family="Liberation Mono, monospace" font-size="11" font-weight="700" fill="#6c6c78">A</text><text transform="translate(7 10.2) scale(.68 1)" font-family="Liberation Mono, monospace" font-size="11" font-weight="700" fill="#ffffff">B</text><text transform="translate(14.6 10.2) scale(.68 1)" font-family="Liberation Mono, monospace" font-size="11" font-weight="700" fill="#6c6c78">C</text></svg>
<svg class="i" style="left:1453px;top:433.8px" width="20" height="13.4" viewBox="0 0 20 13.4"><rect x="4.6" y="0" width="9.4" height="13.4" rx="1.6" fill="#3fa648"/><text transform="translate(-0.1 10.2) scale(.68 1)" font-family="Liberation Mono, monospace" font-size="11" font-weight="700" fill="#6c6c78">A</text><text transform="translate(7 10.2) scale(.68 1)" font-family="Liberation Mono, monospace" font-size="11" font-weight="700" fill="#ffffff">B</text><text transform="translate(14.6 10.2) scale(.68 1)" font-family="Liberation Mono, monospace" font-size="11" font-weight="700" fill="#6c6c78">C</text></svg>
<div style="left:1043.5px;top:438.3px;width:11.5px;height:1.5px;background:#92929e"></div>
<div style="left:1043.5px;top:441.3px;width:11.5px;height:1.5px;background:#92929e"></div>
<div style="left:1158.5px;top:438.3px;width:11.5px;height:1.5px;background:#92929e"></div>
<div style="left:1158.5px;top:441.3px;width:11.5px;height:1.5px;background:#92929e"></div>
<svg class="i" style="left:14.7px;top:436.5px" width="6" height="9" viewBox="0 0 6 9"><ellipse cx="3" cy="2.4" rx="2.6" ry="2.2" fill="#1c1c26"/><ellipse cx="3" cy="1.7" rx="1.3" ry="0.6" fill="#f0f0f4"/><path d="M3 4 V8" stroke="#1c1c26" stroke-width="1.5"/></svg>
<div style="left:0;top:456px;width:1542px;height:309px;overflow:hidden">
<div style="left:33px;top:24.5px;width:1509px;height:1px;background:#dcdce2"></div>
<svg class="i" style="left:15px;top:5.0px" width="12" height="15" viewBox="0 0 12 15"><rect x="0.5" y="0.5" width="11" height="14" rx="1" fill="#fff" stroke="#7880b8" stroke-width="1"/><path d="M1.5 13.5 V11 L10.5 6.5 V13.5Z" fill="#e6e8f0"/></svg>
<span class="t" style="left:61px;top:3.5px;height:18px;line-height:18px;font-size:14px;letter-spacing:0.276px;">2020.07.09 22:14:14.94</span>
<span class="t" style="left:225.2px;top:3.5px;height:18px;line-height:18px;font-size:14px;letter-spacing:-0.129px;">Data Provider 1: Generated message #0</span>
<span class="t" style="left:515.5px;top:3.5px;height:18px;line-height:18px;font-size:14px;letter-spacing:-0.367px;">Example</span>
<span class="t" style="left:620px;top:3.5px;height:18px;line-height:18px;font-size:14px;letter-spacing:0.037px;">Event</span>
<span class="t" style="left:735.2px;top:3.5px;height:18px;line-height:18px;font-size:14px;letter-spacing:0.033px;">svchost</span>
<span class="t" style="left:849.8px;top:3.5px;height:18px;line-height:18px;font-size:14px;letter-spacing:-0.630px;">General</span>
<span class="t" style="left:965.5px;top:3.5px;height:18px;line-height:18px;font-size:14px;letter-spacing:-0.415px;">Lior</span>
<span class="t" style="left:1136.3px;top:3.5px;height:18px;line-height:18px;font-size:14px;letter-spacing:-0.197px;">0</span>
<span class="t" style="left:1245.8px;top:3.5px;height:18px;line-height:18px;font-size:14px;letter-spacing:-0.097px;">3</span>
<span class="t" style="left:1262.6px;top:3.5px;height:18px;line-height:18px;font-size:14px;letter-spacing:-0.590px;">DESKTOP-I4...</span>
<span class="t" style="left:1358.7px;top:3.5px;height:18px;line-height:18px;font-size:14px;letter-spacing:-0.434px;">value</span>
<span class="t" style="left:1452.7px;top:3.5px;height:18px;line-height:18px;font-size:14px;letter-spacing:-0.394px;">value2</span>
<div style="left:33px;top:49.5px;width:1509px;height:1px;background:#dcdce2"></div>
<svg class="i" style="left:12px;top:29.5px" width="17" height="16" viewBox="0 0 17 16"><path d="M4 2 L6.5 5 M12.5 1.5 L10.5 5 M1 6.5 L4 8 M16 6 L13 8 M0.5 11.5 L3.5 10.5 M16.5 11 L13.5 10.5 M2.5 15.5 L5 13 M14.5 15.5 L12 13" stroke="#3a3a30" stroke-width="1.1"/><ellipse cx="8.5" cy="9.8" rx="5.3" ry="5.6" fill="#f09828" stroke="#8a5a18" stroke-width="0.8"/><path d="M3.2 9.8 A5.3 5.6 0 0 1 8.5 4.2 V15.4 A5.3 5.6 0 0 1 3.2 9.8Z" fill="#58a838"/><circle cx="5.8" cy="9.8" r="3.2" fill="#68b840" stroke="#2a7820" stroke-width="0.9"/><path d="M5.8 6.6 V13 M2.6 9.8 H9" stroke="#e8f8e0" stroke-width="0.9"/><circle cx="8.5" cy="4" r="1.8" fill="#4a4a40"/></svg>
<span class="t" style="left:61px;top:28.5px;height:18px;line-height:18px;font-size:14px;letter-spacing:0.276px;">2020.07.09 22:14:15.16</span>
<span class="t" style="left:225.2px;top:28.5px;height:18px;line-height:18px;font-size:14px;letter-spacing:-0.129px;">Data Provider 1: Generated message #2</span>
<span class="t" style="left:515.5px;top:28.5px;height:18px;line-height:18px;font-size:14px;letter-spacing:-0.367px;">Example</span>
<span class="t" style="left:620px;top:28.5px;height:18px;line-height:18px;font-size:14px;letter-spacing:-0.133px;">Debug</span>
<span class="t" style="left:735.2px;top:28.5px;height:18px;line-height:18px;font-size:14px;letter-spacing:-0.574px;">csrss</span>
<span class="t" style="left:849.8px;top:28.5px;height:18px;line-height:18px;font-size:14px;letter-spacing:-0.630px;">General</span>
<span class="t" style="left:965.5px;top:28.5px;height:18px;line-height:18px;font-size:14px;letter-spacing:-0.415px;">Lior</span>
<span class="t" style="left:1136.3px;top:28.5px;height:18px;line-height:18px;font-size:14px;letter-spacing:-0.197px;">0</span>
<span class="t" style="left:1245.8px;top:28.5px;height:18px;line-height:18px;font-size:14px;letter-spacing:-0.097px;">4</span>
<span class="t" style="left:1262.6px;top:28.5px;height:18px;line-height:18px;font-size:14px;letter-spacing:-0.590px;">DESKTOP-I4...</span>
<span class="t" style="left:1358.7px;top:28.5px;height:18px;line-height:18px;font-size:14px;letter-spacing:-0.434px;">value</span>
<span class="t" style="left:1452.7px;top:28.5px;height:18px;line-height:18px;font-size:14px;letter-spacing:-0.394px;">value2</span>
<div style="left:33px;top:74.5px;width:1509px;height:1px;background:#dcdce2"></div>
<svg class="i" style="left:12px;top:54.5px" width="17" height="16" viewBox="0 0 17 16"><path d="M4 2 L6.5 5 M12.5 1.5 L10.5 5 M1 6.5 L4 8 M16 6 L13 8 M0.5 11.5 L3.5 10.5 M16.5 11 L13.5 10.5 M2.5 15.5 L5 13 M14.5 15.5 L12 13" stroke="#3a3a30" stroke-width="1.1"/><ellipse cx="8.5" cy="9.8" rx="5.3" ry="5.6" fill="#f09828" stroke="#8a5a18" stroke-width="0.8"/><path d="M3.2 9.8 A5.3 5.6 0 0 1 8.5 4.2 V15.4 A5.3 5.6 0 0 1 3.2 9.8Z" fill="#58a838"/><circle cx="5.8" cy="9.8" r="3.2" fill="#68b840" stroke="#2a7820" stroke-width="0.9"/><path d="M5.8 6.6 V13 M2.6 9.8 H9" stroke="#e8f8e0" stroke-width="0.9"/><circle cx="8.5" cy="4" r="1.8" fill="#4a4a40"/></svg>
<span class="t" style="left:61px;top:53.5px;height:18px;line-height:18px;font-size:14px;letter-spacing:0.276px;">2020.07.09 22:14:15.27</span>
<span class="t" style="left:225.2px;top:53.5px;height:18px;line-height:18px;font-size:14px;letter-spacing:-0.129px;">Data Provider 1: Generated message #3</span>
<span class="t" style="left:515.5px;top:53.5px;height:18px;line-height:18px;font-size:14px;letter-spacing:-0.367px;">Example</span>
<span class="t" style="left:620px;top:53.5px;height:18px;line-height:18px;font-size:14px;letter-spacing:-0.133px;">Debug</span>
<span class="t" style="left:735.2px;top:53.5px;height:18px;line-height:18px;font-size:14px;letter-spacing:0.204px;">vmmem</span>
<span class="t" style="left:849.8px;top:53.5px;height:18px;line-height:18px;font-size:14px;letter-spacing:-0.630px;">General</span>
<span class="t" style="left:965.5px;top:53.5px;height:18px;line-height:18px;font-size:14px;letter-spacing:-0.415px;">Lior</span>
<span class="t" style="left:1136.3px;top:53.5px;height:18px;line-height:18px;font-size:14px;letter-spacing:-0.197px;">0</span>
<span class="t" style="left:1245.8px;top:53.5px;height:18px;line-height:18px;font-size:14px;letter-spacing:-0.097px;">3</span>
<span class="t" style="left:1262.6px;top:53.5px;height:18px;line-height:18px;font-size:14px;letter-spacing:-0.590px;">DESKTOP-I4...</span>
<span class="t" style="left:1358.7px;top:53.5px;height:18px;line-height:18px;font-size:14px;letter-spacing:-0.434px;">value</span>
<span class="t" style="left:1452.7px;top:53.5px;height:18px;line-height:18px;font-size:14px;letter-spacing:-0.394px;">value2</span>
<div style="left:33px;top:99.5px;width:1509px;height:1px;background:#dcdce2"></div>
<svg class="i" style="left:12px;top:79.5px" width="17" height="16" viewBox="0 0 17 16"><path d="M4 2 L6.5 5 M12.5 1.5 L10.5 5 M1 6.5 L4 8 M16 6 L13 8 M0.5 11.5 L3.5 10.5 M16.5 11 L13.5 10.5 M2.5 15.5 L5 13 M14.5 15.5 L12 13" stroke="#3a3a30" stroke-width="1.1"/><ellipse cx="8.5" cy="9.8" rx="5.3" ry="5.6" fill="#f09828" stroke="#8a5a18" stroke-width="0.8"/><path d="M3.2 9.8 A5.3 5.6 0 0 1 8.5 4.2 V15.4 A5.3 5.6 0 0 1 3.2 9.8Z" fill="#58a838"/><circle cx="5.8" cy="9.8" r="3.2" fill="#68b840" stroke="#2a7820" stroke-width="0.9"/><path d="M5.8 6.6 V13 M2.6 9.8 H9" stroke="#e8f8e0" stroke-width="0.9"/><circle cx="8.5" cy="4" r="1.8" fill="#4a4a40"/></svg>
<span class="t" style="left:61px;top:78.5px;height:18px;line-height:18px;font-size:14px;letter-spacing:0.276px;">2020.07.09 22:14:15.38</span>
<span class="t" style="left:225.2px;top:78.5px;height:18px;line-height:18px;font-size:14px;letter-spacing:-0.129px;">Data Provider 1: Generated message #4</span>
<span class="t" style="left:515.5px;top:78.5px;height:18px;line-height:18px;font-size:14px;letter-spacing:-0.367px;">Example</span>
<span class="t" style="left:620px;top:78.5px;height:18px;line-height:18px;font-size:14px;letter-spacing:-0.133px;">Debug</span>
<span class="t" style="left:735.2px;top:78.5px;height:18px;line-height:18px;font-size:14px;letter-spacing:0.033px;">svchost</span>
<span class="t" style="left:849.8px;top:78.5px;height:18px;line-height:18px;font-size:14px;letter-spacing:-0.630px;">General</span>
<span class="t" style="left:965.5px;top:78.5px;height:18px;line-height:18px;font-size:14px;letter-spacing:-0.415px;">Lior</span>
<span class="t" style="left:1136.3px;top:78.5px;height:18px;line-height:18px;font-size:14px;letter-spacing:-0.197px;">0</span>
<span class="t" style="left:1245.8px;top:78.5px;height:18px;line-height:18px;font-size:14px;letter-spacing:-0.097px;">4</span>
<span class="t" style="left:1262.6px;top:78.5px;height:18px;line-height:18px;font-size:14px;letter-spacing:-0.590px;">DESKTOP-I4...</span>
<span class="t" style="left:1358.7px;top:78.5px;height:18px;line-height:18px;font-size:14px;letter-spacing:-0.434px;">value</span>
<span class="t" style="left:1452.7px;top:78.5px;height:18px;line-height:18px;font-size:14px;letter-spacing:-0.394px;">value2</span>
<div style="left:33px;top:124.5px;width:1509px;height:1px;background:#dcdce2"></div>
<svg class="i" style="left:15px;top:105.0px" width="12" height="15" viewBox="0 0 12 15"><rect x="0.5" y="0.5" width="11" height="14" rx="1" fill="#fff" stroke="#7880b8" stroke-width="1"/><path d="M1.5 13.5 V11 L10.5 6.5 V13.5Z" fill="#e6e8f0"/></svg>
<span class="t" style="left:61px;top:103.5px;height:18px;line-height:18px;font-size:14px;letter-spacing:0.276px;">2020.07.09 22:14:15.49</span>
<span class="t" style="left:225.2px;top:103.5px;height:18px;line-height:18px;font-size:14px;letter-spacing:-0.129px;">Data Provider 1: Generated message #5</span>
<span class="t" style="left:515.5px;top:103.5px;height:18px;line-height:18px;font-size:14px;letter-spacing:-0.367px;">Example</span>
<span class="t" style="left:620px;top:103.5px;height:18px;line-height:18px;font-size:14px;letter-spacing:0.037px;">Event</span>
<span class="t" style="left:735.2px;top:103.5px;height:18px;line-height:18px;font-size:14px;letter-spacing:0.033px;">svchost</span>
<span class="t" style="left:849.8px;top:103.5px;height:18px;line-height:18px;font-size:14px;letter-spacing:-0.630px;">General</span>
<span class="t" style="left:965.5px;top:103.5px;height:18px;line-height:18px;font-size:14px;letter-spacing:-0.415px;">Lior</span>
<span class="t" style="left:1136.3px;top:103.5px;height:18px;line-height:18px;font-size:14px;letter-spacing:-0.197px;">0</span>
<span class="t" style="left:1245.8px;top:103.5px;height:18px;line-height:18px;font-size:14px;letter-spacing:-0.097px;">3</span>
<span class="t" style="left:1262.6px;top:103.5px;height:18px;line-height:18px;font-size:14px;letter-spacing:-0.590px;">DESKTOP-I4...</span>
<span class="t" style="left:1358.7px;top:103.5px;height:18px;line-height:18px;font-size:14px;letter-spacing:-0.434px;">value</span>
<span class="t" style="left:1452.7px;top:103.5px;height:18px;line-height:18px;font-size:14px;letter-spacing:-0.394px;">value2</span>
<div style="left:33px;top:149.5px;width:1509px;height:1px;background:#dcdce2"></div>
<svg class="i" style="left:13px;top:129.5px" width="16" height="17" viewBox="0 0 16 17"><g transform="translate(16 0) scale(-1 1)"><path d="M8 0.9 A7.2 6.3 0 1 1 5.4 13 L3.2 15.8 L3.4 12 A7.2 6.3 0 0 1 8 0.9Z" fill="#fff" stroke="#26262e" stroke-width="1.2"/></g><path d="M6.6 6.2 H9.3 V10.6 H10.3 V11.6 H6.3 V10.6 H7.4 V7.2 H6.6Z" fill="#2038c0"/><rect x="7.2" y="3.2" width="2.2" height="2" fill="#2038c0"/></svg>
<span class="t" style="left:61px;top:128.5px;height:18px;line-height:18px;font-size:14px;letter-spacing:0.276px;">2020.07.09 22:14:15.60</span>
<span class="t" style="left:225.2px;top:128.5px;height:18px;line-height:18px;font-size:14px;letter-spacing:-0.129px;">Data Provider 1: Generated message #6</span>
<span class="t" style="left:515.5px;top:128.5px;height:18px;line-height:18px;font-size:14px;letter-spacing:-0.367px;">Example</span>
<span class="t" style="left:620px;top:128.5px;height:18px;line-height:18px;font-size:14px;letter-spacing:-0.339px;">Verbose</span>
<span class="t" style="left:735.2px;top:128.5px;height:18px;line-height:18px;font-size:14px;letter-spacing:0.033px;">svchost</span>
<span class="t" style="left:849.8px;top:128.5px;height:18px;line-height:18px;font-size:14px;letter-spacing:-0.630px;">General</span>
<span class="t" style="left:965.5px;top:128.5px;height:18px;line-height:18px;font-size:14px;letter-spacing:-0.415px;">Lior</span>
<span class="t" style="left:1136.3px;top:128.5px;height:18px;line-height:18px;font-size:14px;letter-spacing:-0.197px;">0</span>
<span class="t" style="left:1245.8px;top:128.5px;height:18px;line-height:18px;font-size:14px;letter-spacing:-0.097px;">4</span>
<span class="t" style="left:1262.6px;top:128.5px;height:18px;line-height:18px;font-size:14px;letter-spacing:-0.590px;">DESKTOP-I4...</span>
<span class="t" style="left:1358.7px;top:128.5px;height:18px;line-height:18px;font-size:14px;letter-spacing:-0.434px;">value</span>
<span class="t" style="left:1452.7px;top:128.5px;height:18px;line-height:18px;font-size:14px;letter-spacing:-0.394px;">value2</span>
<div style="left:33px;top:150px;width:1509px;height:25px;background:#ffff00"></div>
<div style="left:33px;top:174.5px;width:1509px;height:1px;background:#dcdce2"></div>
<svg class="i" style="left:12px;top:155.0px" width="17" height="15" viewBox="0 0 17 15"><path d="M8.5 1 L16 14 H1Z" fill="#fbe7b8" stroke="#d8903c" stroke-width="1.3" stroke-linejoin="round"/><rect x="7.7" y="5" width="1.7" height="5" fill="#3a3020"/><rect x="7.7" y="11" width="1.7" height="1.7" fill="#3a3020"/></svg>
<span class="t" style="left:61px;top:153.5px;height:18px;line-height:18px;font-size:14px;letter-spacing:0.276px;">2020.07.09 22:14:15.71</span>
<span class="t" style="left:225.2px;top:153.5px;height:18px;line-height:18px;font-size:14px;letter-spacing:-0.129px;">Data Provider 1: Generated message #7</span>
<span class="t" style="left:515.5px;top:153.5px;height:18px;line-height:18px;font-size:14px;letter-spacing:-0.367px;">Example</span>
<span class="t" style="left:620px;top:153.5px;height:18px;line-height:18px;font-size:14px;letter-spacing:0.054px;">Warning</span>
<span class="t" style="left:735.2px;top:153.5px;height:18px;line-height:18px;font-size:14px;letter-spacing:0.033px;">svchost</span>
<span class="t" style="left:849.8px;top:153.5px;height:18px;line-height:18px;font-size:14px;letter-spacing:-0.630px;">General</span>
<span class="t" style="left:965.5px;top:153.5px;height:18px;line-height:18px;font-size:14px;letter-spacing:-0.415px;">Lior</span>
<span class="t" style="left:1136.3px;top:153.5px;height:18px;line-height:18px;font-size:14px;letter-spacing:-0.197px;">0</span>
<span class="t" style="left:1245.8px;top:153.5px;height:18px;line-height:18px;font-size:14px;letter-spacing:-0.097px;">3</span>
<span class="t" style="left:1262.6px;top:153.5px;height:18px;line-height:18px;font-size:14px;letter-spacing:-0.590px;">DESKTOP-I4...</span>
<span class="t" style="left:1358.7px;top:153.5px;height:18px;line-height:18px;font-size:14px;letter-spacing:-0.434px;">value</span>
<span class="t" style="left:1452.7px;top:153.5px;height:18px;line-height:18px;font-size:14px;letter-spacing:-0.394px;">value2</span>
<div style="left:33px;top:199.5px;width:1509px;height:1px;background:#dcdce2"></div>
<svg class="i" style="left:12px;top:179.5px" width="17" height="16" viewBox="0 0 17 16"><path d="M4 2 L6.5 5 M12.5 1.5 L10.5 5 M1 6.5 L4 8 M16 6 L13 8 M0.5 11.5 L3.5 10.5 M16.5 11 L13.5 10.5 M2.5 15.5 L5 13 M14.5 15.5 L12 13" stroke="#3a3a30" stroke-width="1.1"/><ellipse cx="8.5" cy="9.8" rx="5.3" ry="5.6" fill="#f09828" stroke="#8a5a18" stroke-width="0.8"/><path d="M3.2 9.8 A5.3 5.6 0 0 1 8.5 4.2 V15.4 A5.3 5.6 0 0 1 3.2 9.8Z" fill="#58a838"/><circle cx="5.8" cy="9.8" r="3.2" fill="#68b840" stroke="#2a7820" stroke-width="0.9"/><path d="M5.8 6.6 V13 M2.6 9.8 H9" stroke="#e8f8e0" stroke-width="0.9"/><circle cx="8.5" cy="4" r="1.8" fill="#4a4a40"/></svg>
<span class="t" style="left:61px;top:178.5px;height:18px;line-height:18px;font-size:14px;letter-spacing:0.276px;">2020.07.09 22:14:15.82</span>
<span class="t" style="left:225.2px;top:178.5px;height:18px;line-height:18px;font-size:14px;letter-spacing:-0.129px;">Data Provider 1: Generated message #8</span>
<span class="t" style="left:515.5px;top:178.5px;height:18px;line-height:18px;font-size:14px;letter-spacing:-0.367px;">Example</span>
<span class="t" style="left:620px;top:178.5px;height:18px;line-height:18px;font-size:14px;letter-spacing:-0.133px;">Debug</span>
<span class="t" style="left:735.2px;top:178.5px;height:18px;line-height:18px;font-size:14px;letter-spacing:-0.333px;">OfficeClickToRun</span>
<span class="t" style="left:849.8px;top:178.5px;height:18px;line-height:18px;font-size:14px;letter-spacing:-0.630px;">General</span>
<span class="t" style="left:965.5px;top:178.5px;height:18px;line-height:18px;font-size:14px;letter-spacing:-0.415px;">Lior</span>
<span class="t" style="left:1136.3px;top:178.5px;height:18px;line-height:18px;font-size:14px;letter-spacing:-0.197px;">0</span>
<span class="t" style="left:1245.8px;top:178.5px;height:18px;line-height:18px;font-size:14px;letter-spacing:-0.097px;">4</span>
<span class="t" style="left:1262.6px;top:178.5px;height:18px;line-height:18px;font-size:14px;letter-spacing:-0.590px;">DESKTOP-I4...</span>
<span class="t" style="left:1358.7px;top:178.5px;height:18px;line-height:18px;font-size:14px;letter-spacing:-0.434px;">value</span>
<span class="t" style="left:1452.7px;top:178.5px;height:18px;line-height:18px;font-size:14px;letter-spacing:-0.394px;">value2</span>
<div style="left:33px;top:200px;width:1509px;height:25px;background:#ffc0cb"></div>
<div style="left:33px;top:224.5px;width:1509px;height:1px;background:#dcdce2"></div>
<svg class="i" style="left:14px;top:206.0px" width="13" height="13" viewBox="0 0 13 13"><circle cx="6.5" cy="6.5" r="6" fill="#d84040" stroke="#a82424" stroke-width="0.9"/><path d="M4.2 4.2 L8.8 8.8 M8.8 4.2 L4.2 8.8" stroke="#fff" stroke-width="1.8" stroke-linecap="round"/></svg>
<span class="t" style="left:61px;top:203.5px;height:18px;line-height:18px;font-size:14px;letter-spacing:0.276px;">2020.07.09 22:14:15.93</span>
<span class="t" style="left:225.2px;top:203.5px;height:18px;line-height:18px;font-size:14px;letter-spacing:-0.129px;">Data Provider 1: Generated message #9</span>
<span class="t" style="left:515.5px;top:203.5px;height:18px;line-height:18px;font-size:14px;letter-spacing:-0.367px;">Example</span>
<span class="t" style="left:620px;top:203.5px;height:18px;line-height:18px;font-size:14px;letter-spacing:-0.025px;">Error</span>
<span class="t" style="left:735.2px;top:203.5px;height:18px;line-height:18px;font-size:14px;letter-spacing:0.033px;">svchost</span>
<span class="t" style="left:849.8px;top:203.5px;height:18px;line-height:18px;font-size:14px;letter-spacing:-0.630px;">General</span>
<span class="t" style="left:965.5px;top:203.5px;height:18px;line-height:18px;font-size:14px;letter-spacing:-0.415px;">Lior</span>
<span class="t" style="left:1136.3px;top:203.5px;height:18px;line-height:18px;font-size:14px;letter-spacing:-0.197px;">0</span>
<span class="t" style="left:1245.8px;top:203.5px;height:18px;line-height:18px;font-size:14px;letter-spacing:-0.097px;">3</span>
<span class="t" style="left:1262.6px;top:203.5px;height:18px;line-height:18px;font-size:14px;letter-spacing:-0.590px;">DESKTOP-I4...</span>
<span class="t" style="left:1358.7px;top:203.5px;height:18px;line-height:18px;font-size:14px;letter-spacing:-0.434px;">value</span>
<span class="t" style="left:1452.7px;top:203.5px;height:18px;line-height:18px;font-size:14px;letter-spacing:-0.394px;">value2</span>
<div style="left:33px;top:249.5px;width:1509px;height:1px;background:#dcdce2"></div>
<svg class="i" style="left:15px;top:230.0px" width="12" height="15" viewBox="0 0 12 15"><rect x="0.5" y="0.5" width="11" height="14" rx="1" fill="#fff" stroke="#7880b8" stroke-width="1"/><path d="M1.5 13.5 V11 L10.5 6.5 V13.5Z" fill="#e6e8f0"/></svg>
<span class="t" style="left:61px;top:228.5px;height:18px;line-height:18px;font-size:14px;letter-spacing:0.276px;">2020.07.09 22:14:16.15</span>
<span class="t" style="left:225.2px;top:228.5px;height:18px;line-height:18px;font-size:14px;letter-spacing:-0.087px;">Data Provider 1: Generated message #11</span>
<span class="t" style="left:515.5px;top:228.5px;height:18px;line-height:18px;font-size:14px;letter-spacing:-0.367px;">Example</span>
<span class="t" style="left:620px;top:228.5px;height:18px;line-height:18px;font-size:14px;letter-spacing:0.037px;">Event</span>
<span class="t" style="left:735.2px;top:228.5px;height:18px;line-height:18px;font-size:14px;letter-spacing:0.079px;">dwm</span>
<span class="t" style="left:849.8px;top:228.5px;height:18px;line-height:18px;font-size:14px;letter-spacing:-0.630px;">General</span>
<span class="t" style="left:965.5px;top:228.5px;height:18px;line-height:18px;font-size:14px;letter-spacing:-0.415px;">Lior</span>
<span class="t" style="left:1136.3px;top:228.5px;height:18px;line-height:18px;font-size:14px;letter-spacing:-0.197px;">0</span>
<span class="t" style="left:1245.8px;top:228.5px;height:18px;line-height:18px;font-size:14px;letter-spacing:-0.097px;">3</span>
<span class="t" style="left:1262.6px;top:228.5px;height:18px;line-height:18px;font-size:14px;letter-spacing:-0.590px;">DESKTOP-I4...</span>
<span class="t" style="left:1358.7px;top:228.5px;height:18px;line-height:18px;font-size:14px;letter-spacing:-0.434px;">value</span>
<span class="t" style="left:1452.7px;top:228.5px;height:18px;line-height:18px;font-size:14px;letter-spacing:-0.394px;">value2</span>
<div style="left:33px;top:274.5px;width:1509px;height:1px;background:#dcdce2"></div>
<div style="left:13px;top:254.5px;width:16px;height:16px;background:linear-gradient(165deg,#000 0%,#000 42%,#0a6a6a 68%,#19f0f0 100%)"></div>
<span class="t" style="left:14px;top:255.8px;height:5px;line-height:5px;font-size:3.6px;letter-spacing:-0.027px;font-weight:700;color:#e818d8;">Analogy</span>
<span class="t" style="left:61px;top:253.5px;height:18px;line-height:18px;font-size:14px;letter-spacing:0.276px;">2020.07.09 22:14:16.26</span>
<span class="t" style="left:225.2px;top:253.5px;height:18px;line-height:18px;font-size:14px;letter-spacing:-0.115px;">Data Provider 1: Generated message #12</span>
<span class="t" style="left:515.5px;top:253.5px;height:18px;line-height:18px;font-size:14px;letter-spacing:-0.367px;">Example</span>
<span class="t" style="left:620px;top:253.5px;height:18px;line-height:18px;font-size:14px;letter-spacing:-0.059px;">AnalogyInform...</span>
<span class="t" style="left:735.2px;top:253.5px;height:18px;line-height:18px;font-size:14px;letter-spacing:0.033px;">svchost</span>
<span class="t" style="left:849.8px;top:253.5px;height:18px;line-height:18px;font-size:14px;letter-spacing:-0.630px;">General</span>
<span class="t" style="left:965.5px;top:253.5px;height:18px;line-height:18px;font-size:14px;letter-spacing:-0.415px;">Lior</span>
<span class="t" style="left:1136.3px;top:253.5px;height:18px;line-height:18px;font-size:14px;letter-spacing:-0.197px;">0</span>
<span class="t" style="left:1245.8px;top:253.5px;height:18px;line-height:18px;font-size:14px;letter-spacing:-0.097px;">3</span>
<span class="t" style="left:1262.6px;top:253.5px;height:18px;line-height:18px;font-size:14px;letter-spacing:-0.590px;">DESKTOP-I4...</span>
<span class="t" style="left:1358.7px;top:253.5px;height:18px;line-height:18px;font-size:14px;letter-spacing:-0.434px;">value</span>
<span class="t" style="left:1452.7px;top:253.5px;height:18px;line-height:18px;font-size:14px;letter-spacing:-0.394px;">value2</span>
<div style="left:33px;top:299.5px;width:1509px;height:1px;background:#dcdce2"></div>
<svg class="i" style="left:15px;top:280.0px" width="12" height="15" viewBox="0 0 12 15"><rect x="0.5" y="0.5" width="11" height="14" rx="1" fill="#fff" stroke="#7880b8" stroke-width="1"/><path d="M1.5 13.5 V11 L10.5 6.5 V13.5Z" fill="#e6e8f0"/></svg>
<span class="t" style="left:61px;top:278.5px;height:18px;line-height:18px;font-size:14px;letter-spacing:0.276px;">2020.07.09 22:14:16.36</span>
<span class="t" style="left:225.2px;top:278.5px;height:18px;line-height:18px;font-size:14px;letter-spacing:-0.115px;">Data Provider 1: Generated message #13</span>
<span class="t" style="left:515.5px;top:278.5px;height:18px;line-height:18px;font-size:14px;letter-spacing:-0.367px;">Example</span>
<span class="t" style="left:620px;top:278.5px;height:18px;line-height:18px;font-size:14px;letter-spacing:-0.156px;">Trace</span>
<span class="t" style="left:735.2px;top:278.5px;height:18px;line-height:18px;font-size:14px;letter-spacing:-0.237px;">RuntimeBroker</span>
<span class="t" style="left:849.8px;top:278.5px;height:18px;line-height:18px;font-size:14px;letter-spacing:-0.630px;">General</span>
<span class="t" style="left:965.5px;top:278.5px;height:18px;line-height:18px;font-size:14px;letter-spacing:-0.415px;">Lior</span>
<span class="t" style="left:1136.3px;top:278.5px;height:18px;line-height:18px;font-size:14px;letter-spacing:-0.197px;">0</span>
<span class="t" style="left:1245.8px;top:278.5px;height:18px;line-height:18px;font-size:14px;letter-spacing:-0.097px;">4</span>
<span class="t" style="left:1262.6px;top:278.5px;height:18px;line-height:18px;font-size:14px;letter-spacing:-0.590px;">DESKTOP-I4...</span>
<span class="t" style="left:1358.7px;top:278.5px;height:18px;line-height:18px;font-size:14px;letter-spacing:-0.434px;">value</span>
<span class="t" style="left:1452.7px;top:278.5px;height:18px;line-height:18px;font-size:14px;letter-spacing:-0.394px;">value2</span>
<div style="left:33px;top:324.5px;width:1509px;height:1px;background:#dcdce2"></div>
<svg class="i" style="left:15px;top:305.0px" width="12" height="15" viewBox="0 0 12 15"><rect x="0.5" y="0.5" width="11" height="14" rx="1" fill="#fff" stroke="#7880b8" stroke-width="1"/><path d="M1.5 13.5 V11 L10.5 6.5 V13.5Z" fill="#e6e8f0"/></svg>
<span class="t" style="left:61px;top:303.5px;height:18px;line-height:18px;font-size:14px;letter-spacing:0.276px;">2020.07.09 22:14:16.48</span>
<span class="t" style="left:225.2px;top:303.5px;height:18px;line-height:18px;font-size:14px;letter-spacing:-0.115px;">Data Provider 1: Generated message #14</span>
<span class="t" style="left:515.5px;top:303.5px;height:18px;line-height:18px;font-size:14px;letter-spacing:-0.367px;">Example</span>
<span class="t" style="left:620px;top:303.5px;height:18px;line-height:18px;font-size:14px;letter-spacing:0.037px;">Event</span>
<span class="t" style="left:735.2px;top:303.5px;height:18px;line-height:18px;font-size:14px;letter-spacing:0.033px;">svchost</span>
<span class="t" style="left:849.8px;top:303.5px;height:18px;line-height:18px;font-size:14px;letter-spacing:-0.630px;">General</span>
<span class="t" style="left:965.5px;top:303.5px;height:18px;line-height:18px;font-size:14px;letter-spacing:-0.415px;">Lior</span>
<span class="t" style="left:1136.3px;top:303.5px;height:18px;line-height:18px;font-size:14px;letter-spacing:-0.197px;">0</span>
<span class="t" style="left:1245.8px;top:303.5px;height:18px;line-height:18px;font-size:14px;letter-spacing:-0.097px;">5</span>
<span class="t" style="left:1262.6px;top:303.5px;height:18px;line-height:18px;font-size:14px;letter-spacing:-0.590px;">DESKTOP-I4...</span>
<span class="t" style="left:1358.7px;top:303.5px;height:18px;line-height:18px;font-size:14px;letter-spacing:-0.434px;">value</span>
<span class="t" style="left:1452.7px;top:303.5px;height:18px;line-height:18px;font-size:14px;letter-spacing:-0.394px;">value2</span>
<div style="left:56px;top:0px;width:1px;height:330px;background:#dcdce2"></div>
<div style="left:220px;top:0px;width:1px;height:330px;background:#dcdce2"></div>
<div style="left:510px;top:0px;width:1px;height:330px;background:#dcdce2"></div>
<div style="left:615px;top:0px;width:1px;height:330px;background:#dcdce2"></div>
<div style="left:730px;top:0px;width:1px;height:330px;background:#dcdce2"></div>
<div style="left:845px;top:0px;width:1px;height:330px;background:#dcdce2"></div>
<div style="left:960px;top:0px;width:1px;height:330px;background:#dcdce2"></div>
<div style="left:1033px;top:0px;width:1px;height:330px;background:#dcdce2"></div>
<div style="left:1148px;top:0px;width:1px;height:330px;background:#dcdce2"></div>
<div style="left:1257px;top:0px;width:1px;height:330px;background:#dcdce2"></div>
<div style="left:1353px;top:0px;width:1px;height:330px;background:#dcdce2"></div>
<div style="left:1447px;top:0px;width:1px;height:330px;background:#dcdce2"></div>
<div style="left:33.5px;top:0.5px;width:1507.5px;height:24px;border:1px dotted #3a3a46"></div>
</div>
<div style="left:1542px;top:427.5px;width:21px;height:338px;background:#f3f3f6"></div>
<svg class="i" style="left:1549px;top:435.5px" width="8" height="5" viewBox="0 0 8 5"><polygon points="0,5 8,5 4,0" fill="#8a8a98"/></svg>
<svg class="i" style="left:1549px;top:752px" width="8" height="5" viewBox="0 0 8 5"><polygon points="0,0 8,0 4,5" fill="#8a8a98"/></svg>
<div style="left:1547.5px;top:449px;width:10.5px;height:177px;background:linear-gradient(90deg,#e2e2e8,#d4d4dc);border:1px solid #b2b2be;border-radius:5px"></div>
<div style="left:8.5px;top:765px;width:1554px;height:20.5px;background:#f2f2f5"></div>
<svg class="i" style="left:17px;top:771.5px" width="5" height="8" viewBox="0 0 5 8"><polygon points="5,0 5,8 0,4" fill="#8a8a98"/></svg>
<svg class="i" style="left:1529.5px;top:771.5px" width="5" height="8" viewBox="0 0 5 8"><polygon points="0,0 0,8 5,4" fill="#8a8a98"/></svg>
<div style="left:167.5px;top:770.5px;width:1353.5px;height:10.5px;background:linear-gradient(#e0e0e6,#d4d4dc);border:1px solid #b6b6c2;border-radius:4px"></div>
<div style="left:9.5px;top:790.5px;width:15.5px;height:15.5px;background:#fff;border:1px solid #33333d"></div>
<span class="t" style="left:29.7px;top:789.0px;height:17px;line-height:17px;font-size:13px;letter-spacing:-0.042px;">Highlight lines that contains:</span>
<div style="left:205px;top:786px;width:766px;height:22px;background:#fff;border:1px solid #d3d3da;border-top-color:#9a9aa6;border-bottom-color:#dadae0"></div>
<div style="left:972px;top:786px;width:71px;height:25.5px;background:linear-gradient(#f8f8fa,#e4e4ea);border:1px solid #adadb9;border-radius:3px"></div>
<span class="t" style="left:985.5px;top:790.8px;height:17px;line-height:17px;font-size:13px;letter-spacing:-0.010px;">More ...</span>
<div style="left:1104px;top:786px;width:73px;height:24.5px;background:linear-gradient(#f8f8fa,#e4e4ea);border:1px solid #adadb9;border-radius:3px"></div>
<span class="t" style="left:1112.5px;top:790.0px;height:17px;line-height:17px;font-size:13px;letter-spacing:-0.042px;">first Page</span>
<div style="left:1180.5px;top:786px;width:87.5px;height:24.5px;background:linear-gradient(#f8f8fa,#e4e4ea);border:1px solid #adadb9;border-radius:3px"></div>
<span class="t" style="left:1185px;top:790.0px;height:17px;line-height:17px;font-size:13px;letter-spacing:-0.389px;">Previous Page</span>
<span class="t" style="left:1302.6px;top:791.1px;height:17px;line-height:17px;font-size:13px;letter-spacing:-0.188px;">Page 1 / 1</span>
<div style="left:1398px;top:786px;width:86.5px;height:24.5px;background:linear-gradient(#f8f8fa,#e4e4ea);border:1px solid #adadb9;border-radius:3px"></div>
<span class="t" style="left:1413px;top:790.0px;height:17px;line-height:17px;font-size:13px;letter-spacing:-0.467px;">Next Page</span>
<div style="left:1487.5px;top:786px;width:72px;height:24.5px;background:linear-gradient(#f8f8fa,#e4e4ea);border:1px solid #adadb9;border-radius:3px"></div>
<span class="t" style="left:1496px;top:790.0px;height:17px;line-height:17px;font-size:13px;letter-spacing:-0.450px;">Last Page</span>
<svg class="i" style="left:782px;top:812px" width="7" height="4" viewBox="0 0 7 4"><polygon points="0,4 7,4 3.5,0" fill="#7a7a88"/></svg>
<span class="t" style="left:9.5px;top:819.1px;height:21px;line-height:21px;font-size:16.5px;letter-spacing:0.177px;color:#14141c;">Total messages:19. Errors:2. Warnings:1. Criticals:0.</span>
<div style="left:5px;top:856px;width:1567px;height:34px;background:linear-gradient(#dedee4,#d5d5dc 45%,#cdcdd5);border-top:1px solid #f0f0f4"></div>
<div style="left:5px;top:854.5px;width:1567px;height:1.5px;background:#e6e6eb"></div>
<svg class="i" style="left:14px;top:864px" width="20" height="20" viewBox="0 0 20 20"><path d="M10 1 L12.7 7.2 L19.3 7.8 L14.3 12.3 L15.8 18.9 L10 15.4 L4.2 18.9 L5.7 12.3 L0.7 7.8 L7.3 7.2Z" fill="#6cacec" stroke="#3a82d2" stroke-width="1.6" stroke-linejoin="round"/><path d="M10 3.2 L12 7.9 L17 8.4 L10 9.5 L3 8.4 L8 7.9Z" fill="#a8d0f8" opacity=".8"/></svg>
<span class="t" style="left:39.3px;top:866.2px;height:17px;line-height:17px;font-size:13px;letter-spacing:-0.695px;">GitHub</span>
<svg class="i" style="left:91px;top:863.5px" width="19" height="20" viewBox="0 0 19 20"><path d="M1 0.6 H13.5 V14 H1Z" fill="#fdfdfe" stroke="#8a94b8" stroke-width="1"/><circle cx="11.5" cy="12.5" r="6" fill="#5a9ae0" stroke="#2a68b8" stroke-width="0.9"/><circle cx="11.5" cy="12.5" r="4" fill="#cfe2f8"/><path d="M9.3 12.6 L11 14.3 L14 10.8" fill="none" stroke="#2a68b8" stroke-width="1.3"/></svg>
<span class="t" style="left:115.4px;top:866.2px;height:17px;line-height:17px;font-size:13px;letter-spacing:-0.182px;">Report Issue Or Request</span>
<svg class="i" style="left:272px;top:864px" width="17" height="19" viewBox="0 0 17 19"><path d="M1 2 Q1 0.7 2.3 0.7 H9.5 Q10.8 0.7 10.8 2 V14.3 H1Z" fill="#f4b848" stroke="#c88420" stroke-width="1"/><rect x="2.6" y="2.5" width="3" height="10" fill="#fbd888"/><circle cx="11.5" cy="13.5" r="4.3" fill="#8890a8" stroke="#5a627c" stroke-width="0.9" stroke-dasharray="2 1.2"/><circle cx="11.5" cy="13.5" r="3.4" fill="#aab0c4"/><circle cx="11.5" cy="13.5" r="1.4" fill="#f4f4f8"/></svg>
<span class="t" style="left:294.2px;top:866.2px;height:17px;line-height:17px;font-size:13px;letter-spacing:-0.018px;">Latest Version: V4.2.2</span>
<div style="left:806px;top:861px;width:1px;height:27px;background:#b8b8c2"></div>
<div style="left:807px;top:861px;width:1px;height:27px;background:#f0f0f4"></div>
<span class="t" style="left:818px;top:866.2px;height:17px;line-height:17px;font-size:13px;letter-spacing:-0.037px;">File caching is off</span>
<span class="t" style="left:932px;top:866.2px;height:17px;line-height:17px;font-size:13px;letter-spacing:0.007px;">Idle mode is on. User idle: 00:00:00. Missed messages: 0</span>
<span class="t" style="left:1277.7px;top:866.2px;height:17px;line-height:17px;font-size:13px;letter-spacing:-0.116px;">168 [MB]</span>
<svg class="i" style="left:1343.5px;top:865px" width="21" height="17" viewBox="0 0 21 17"><g transform="rotate(-35 10.5 8.5)"><rect x="1" y="4.5" width="19" height="8" rx="2" fill="#e85848" stroke="#b83828" stroke-width="0.8"/><rect x="1" y="4.5" width="7" height="8" rx="2" fill="#4a98e8" stroke="#2a68b8" stroke-width="0.8"/><rect x="8" y="5.3" width="11" height="2.5" fill="#f49888" opacity=".9"/></g></svg>
<span class="t" style="left:1368.6px;top:866.2px;height:17px;line-height:17px;font-size:13px;letter-spacing:-0.227px;">Compact Memory</span>
<svg class="i" style="left:1481.5px;top:864.5px" width="21" height="19" viewBox="0 0 21 19"><path d="M10.5 1.2 L20 17.5 H1Z" fill="#fbe4b0" stroke="#d88c38" stroke-width="1.5" stroke-linejoin="round"/><rect x="9.5" y="6.5" width="2.1" height="6" fill="#3a3020"/><rect x="9.5" y="13.7" width="2.1" height="2.1" fill="#3a3020"/></svg>
<span class="t" style="left:1507.4px;top:866.2px;height:17px;line-height:17px;font-size:13px;letter-spacing:-0.065px;">Errors</span>
<svg class="i" style="left:1557.5px;top:873.5px" width="11" height="11" viewBox="0 0 11 11"><path d="M10.5 0.5 L0.5 10.5 M10.5 4.5 L4.5 10.5 M10.5 8.5 L8.5 10.5" stroke="#9a9aa8" stroke-width="1.1"/><path d="M10.5 1.7 L1.7 10.5 M10.5 5.7 L5.7 10.5" stroke="#f4f4f8" stroke-width="0.8"/></svg>
</body></html>
